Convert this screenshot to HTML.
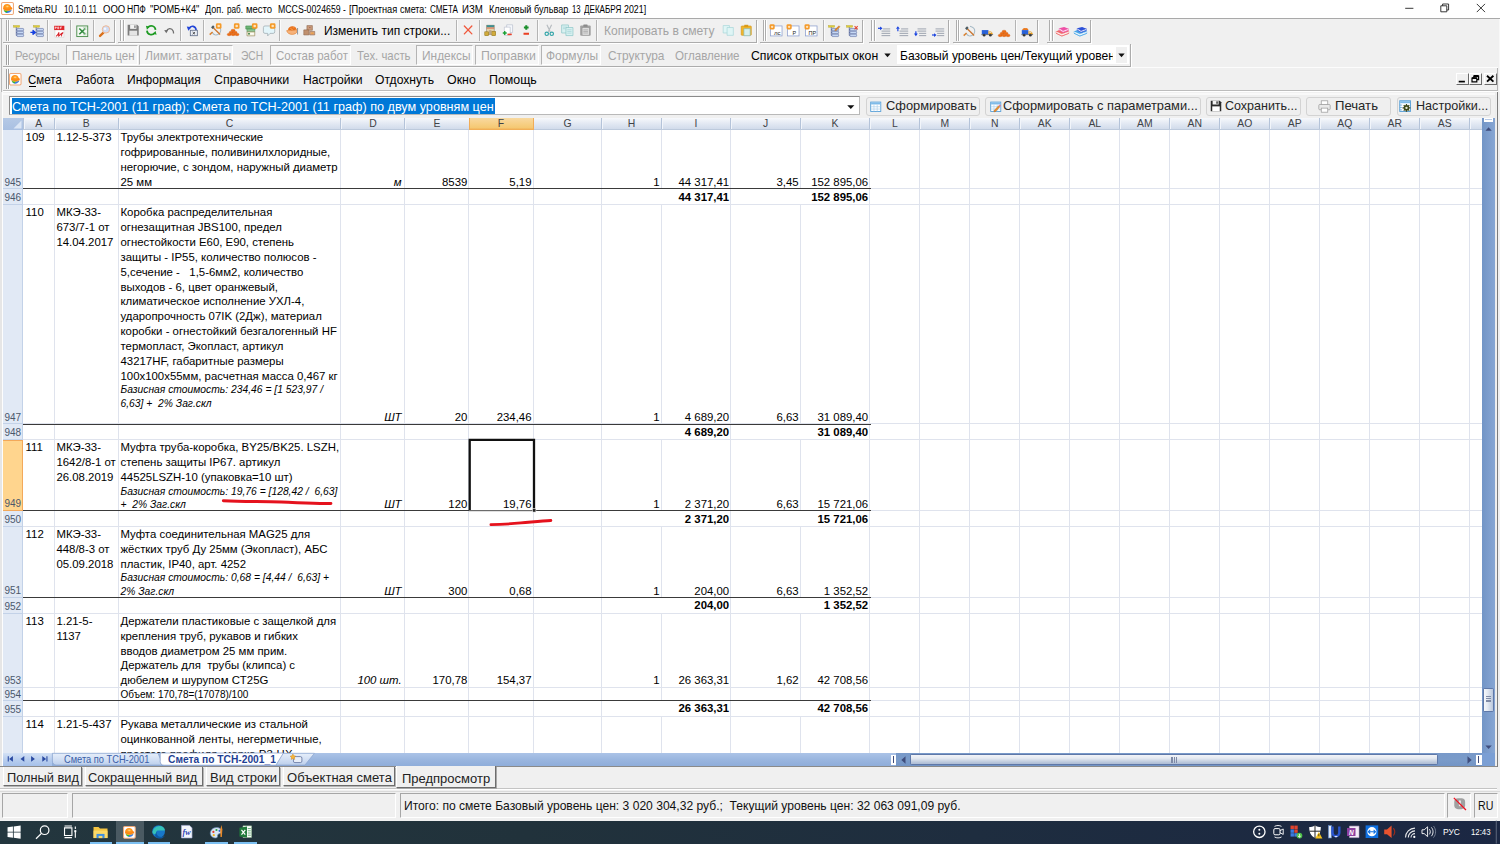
<!DOCTYPE html>
<html lang="ru"><head><meta charset="utf-8"><title>Smeta.RU</title><style>
html,body{margin:0;padding:0}
body{width:1500px;height:844px;position:relative;overflow:hidden;background:#f0f0f0;font-family:"Liberation Sans",sans-serif}
.b,.t,.c,.i{position:absolute}
.t{white-space:pre}
.c{white-space:pre;color:#000;overflow:visible}
.i{display:block;overflow:visible}
</style></head>
<body>
<!-- top -->
<div class="b" style="left:0.00px;top:0.00px;width:1500.00px;height:18.40px;background:#fff"></div>
<div class="b" style="left:0.00px;top:18.00px;width:1500.00px;height:1.00px;background:#a9a9a9"></div>
<svg class="i" style="left:1.20px;top:1.90px" width="13" height="13" viewBox="0 0 16 16"><defs><radialGradient id="ag1" cx=".45" cy=".38" r=".6"><stop offset="0" stop-color="#ffd98a"/><stop offset=".35" stop-color="#ff9a1e"/><stop offset="1" stop-color="#ff7f0e"/></radialGradient></defs><rect x=".7" y=".7" width="14.600" height="14.600" rx="1.600" fill="#fff" stroke="#f0a878" stroke-width="1.300"/><path d="M3.400 9.800c1 3.900 5.600 5.600 9.200 1.400l.5-1.800z" fill="#3a7be6"/><path d="M3.400 9.600c.5 2 2 3.200 3.800 3.400.3-1.400 1.200-2.600 2.600-3.200z" fill="#34c224"/><path d="M3 9.200c2.500 1.200 6.500 1.400 10.200-.6l-.2 1.400c-3 1.500-7 1.600-9.800.2z" fill="#ffb43a"/><path d="M2.600 7.600C2.600 4.600 4.800 2.600 7.600 2.600c2.400 0 4.200 1.400 4.800 3.600.8.400 1.400 1 1.700 1.800-1.400 1.500-4 2.200-6.500 2.200-2.200 0-4-.6-5-1.500z" fill="url(#ag1)"/></svg>
<div class="t" style="left:18.20px;top:2.63px;line-height:13.0px;font-size:10px;color:#000;transform:scaleX(0.8477);transform-origin:left 0;">Smeta.RU</div>
<div class="t" style="left:63.60px;top:2.63px;line-height:13.0px;font-size:10px;color:#000;transform:scaleX(0.8032);transform-origin:left 0;">10.1.0.11</div>
<div class="t" style="left:103.00px;top:2.63px;line-height:13.0px;font-size:10px;color:#000;transform:scaleX(0.9514);transform-origin:left 0;">ООО</div>
<div class="t" style="left:127.30px;top:2.63px;line-height:13.0px;font-size:10px;color:#000;transform:scaleX(0.8586);transform-origin:left 0;">НПФ</div>
<div class="t" style="left:150.20px;top:2.63px;line-height:13.0px;font-size:10px;color:#000;transform:scaleX(0.9224);transform-origin:left 0;">"РОМБ+К4"</div>
<div class="t" style="left:204.80px;top:2.63px;line-height:13.0px;font-size:10px;color:#000;transform:scaleX(0.9109);transform-origin:left 0;">Доп.</div>
<div class="t" style="left:226.70px;top:2.63px;line-height:13.0px;font-size:10px;color:#000;transform:scaleX(0.8202);transform-origin:left 0;">раб.</div>
<div class="t" style="left:245.90px;top:2.63px;line-height:13.0px;font-size:10px;color:#000;transform:scaleX(0.9503);transform-origin:left 0;">место</div>
<div class="t" style="left:277.60px;top:2.63px;line-height:13.0px;font-size:10px;color:#000;transform:scaleX(0.8730);transform-origin:left 0;">MCCS-0024659</div>
<div class="t" style="left:343.40px;top:2.63px;line-height:13.0px;font-size:10px;color:#000;transform:scaleX(0.8408);transform-origin:left 0;">-</div>
<div class="t" style="left:349.20px;top:2.63px;line-height:13.0px;font-size:10px;color:#000;transform:scaleX(0.9231);transform-origin:left 0;">[Проектная</div>
<div class="t" style="left:400.00px;top:2.63px;line-height:13.0px;font-size:10px;color:#000;transform:scaleX(0.8960);transform-origin:left 0;">смета:</div>
<div class="t" style="left:430.00px;top:2.63px;line-height:13.0px;font-size:10px;color:#000;transform:scaleX(0.8103);transform-origin:left 0;">СМЕТА</div>
<div class="t" style="left:461.80px;top:2.63px;line-height:13.0px;font-size:10px;color:#000;transform:scaleX(0.9649);transform-origin:left 0;">ИЗМ</div>
<div class="t" style="left:488.50px;top:2.63px;line-height:13.0px;font-size:10px;color:#000;transform:scaleX(0.9118);transform-origin:left 0;">Кленовый</div>
<div class="t" style="left:534.30px;top:2.63px;line-height:13.0px;font-size:10px;color:#000;transform:scaleX(0.9109);transform-origin:left 0;">бульвар</div>
<div class="t" style="left:572.20px;top:2.63px;line-height:13.0px;font-size:10px;color:#000;transform:scaleX(0.7732);transform-origin:left 0;">13</div>
<div class="t" style="left:584.00px;top:2.63px;line-height:13.0px;font-size:10px;color:#000;transform:scaleX(0.8100);transform-origin:left 0;">ДЕКАБРЯ</div>
<div class="t" style="left:624.40px;top:2.63px;line-height:13.0px;font-size:10px;color:#000;transform:scaleX(0.8831);transform-origin:left 0;">2021]</div>
<svg class="i" style="left:1400px;top:0" width="100" height="18" viewBox="0 0 100 18"><path d="M5.200 8.300h8.200" stroke="#222" stroke-width=".9"/><path d="M40.800 5.800h6v6h-6z M42.600 5.800V4h6v6h-1.800" stroke="#222" stroke-width=".9" fill="none"/><path d="M76.800 3.900l8.200 8.200M85 3.900l-8.200 8.200" stroke="#222" stroke-width=".9"/></svg>
<div class="b" style="left:0.00px;top:19.00px;width:1500.00px;height:73.00px;background:#f0f0f0"></div>
<div class="b" style="left:0.60px;top:19.00px;width:1.00px;height:73.00px;background:#b8b8b8"></div>
<div class="b" style="left:2.80px;top:19.50px;width:112.70px;height:23.20px;border-right:1px solid #acacac;border-bottom:1px solid #acacac;box-sizing:border-box;box-shadow:1px 1px 0 #fff"></div><div class="b" style="left:5.60px;top:20.20px;width:1.00px;height:20.60px;background:#adadad;box-shadow:1px 0 0 #fff"></div><div class="b" style="left:7.80px;top:20.20px;width:1.00px;height:20.60px;background:#adadad;box-shadow:1px 0 0 #fff"></div>
<div class="b" style="left:117.50px;top:19.50px;width:639.00px;height:23.20px;border-right:1px solid #acacac;border-bottom:1px solid #acacac;box-sizing:border-box;box-shadow:1px 1px 0 #fff"></div><div class="b" style="left:120.30px;top:20.20px;width:1.00px;height:20.60px;background:#adadad;box-shadow:1px 0 0 #fff"></div><div class="b" style="left:122.50px;top:20.20px;width:1.00px;height:20.60px;background:#adadad;box-shadow:1px 0 0 #fff"></div>
<div class="b" style="left:760.00px;top:19.50px;width:103.00px;height:23.20px;border-right:1px solid #acacac;border-bottom:1px solid #acacac;box-sizing:border-box;box-shadow:1px 1px 0 #fff"></div><div class="b" style="left:762.80px;top:20.20px;width:1.00px;height:20.60px;background:#adadad;box-shadow:1px 0 0 #fff"></div><div class="b" style="left:765.00px;top:20.20px;width:1.00px;height:20.60px;background:#adadad;box-shadow:1px 0 0 #fff"></div>
<div class="b" style="left:868.60px;top:19.50px;width:80.40px;height:23.20px;border-right:1px solid #acacac;border-bottom:1px solid #acacac;box-sizing:border-box;box-shadow:1px 1px 0 #fff"></div><div class="b" style="left:871.40px;top:20.20px;width:1.00px;height:20.60px;background:#adadad;box-shadow:1px 0 0 #fff"></div><div class="b" style="left:873.60px;top:20.20px;width:1.00px;height:20.60px;background:#adadad;box-shadow:1px 0 0 #fff"></div>
<div class="b" style="left:952.80px;top:19.50px;width:85.20px;height:23.20px;border-right:1px solid #acacac;border-bottom:1px solid #acacac;box-sizing:border-box;box-shadow:1px 1px 0 #fff"></div><div class="b" style="left:955.60px;top:20.20px;width:1.00px;height:20.60px;background:#adadad;box-shadow:1px 0 0 #fff"></div><div class="b" style="left:957.80px;top:20.20px;width:1.00px;height:20.60px;background:#adadad;box-shadow:1px 0 0 #fff"></div>
<div class="b" style="left:1046.60px;top:19.50px;width:44.60px;height:23.20px;border-right:1px solid #acacac;border-bottom:1px solid #acacac;box-sizing:border-box;box-shadow:1px 1px 0 #fff"></div><div class="b" style="left:1049.40px;top:20.20px;width:1.00px;height:20.60px;background:#adadad;box-shadow:1px 0 0 #fff"></div><div class="b" style="left:1051.60px;top:20.20px;width:1.00px;height:20.60px;background:#adadad;box-shadow:1px 0 0 #fff"></div>
<svg class="i" style="left:12.80px;top:24.50px" width="12.5" height="12.5" viewBox="0 0 16 16"><rect x=".5" y=".6" width="8" height="2.300" fill="#dccb3a" stroke="#a89a22" stroke-width=".4"/><path d="M4.200 2.900V13.300h1M4.200 6h1M4.200 9.700h1" stroke="#3f5290" stroke-width=".9" fill="none"/><rect x="5" y="4.4" width="8.600" height="3" rx=".9" fill="#c6d8f4" stroke="#3f5290" stroke-width=".6"/><rect x="5" y="8.100000000000001" width="8.600" height="3" rx=".9" fill="#c6d8f4" stroke="#3f5290" stroke-width=".6"/><rect x="5" y="11.8" width="8.600" height="3" rx=".9" fill="#c6d8f4" stroke="#3f5290" stroke-width=".6"/></svg>
<svg class="i" style="left:30.80px;top:24.50px" width="12.5" height="12.5" viewBox="0 0 16 16"><rect x="3" y=".6" width="8" height="2.300" fill="#dccb3a" stroke="#a89a22" stroke-width=".4"/><path d="M6.600 2.900V13.300h1M6.600 6h1M6.600 9.700h1" stroke="#3f5290" stroke-width=".9" fill="none"/><rect x="7.4" y="4.4" width="8.600" height="3" rx=".9" fill="#c6d8f4" stroke="#3f5290" stroke-width=".6"/><rect x="7.4" y="8.100000000000001" width="8.600" height="3" rx=".9" fill="#c6d8f4" stroke="#3f5290" stroke-width=".6"/><rect x="7.4" y="11.8" width="8.600" height="3" rx=".9" fill="#c6d8f4" stroke="#3f5290" stroke-width=".6"/><path d="M-.8 9.500h3.500M2.600 7 5.600 9.500 2.600 12z" stroke="#1540e0" stroke-width="1.600" fill="#1540e0" stroke-linejoin="round"/></svg>
<svg class="i" style="left:52.80px;top:24.50px" width="12.5" height="12.5" viewBox="0 0 16 16"><rect x="2.500" y="6" width="11.500" height="9.500" fill="#fff" stroke="#c8c8c8" stroke-width=".6"/><rect x="1.500" y="1" width="13" height="5.500" fill="#e0262b"/><path d="M3 4.800V2.500h1.200v1.200H3M6 2.500v2.300h1.300V2.500zM9.500 4.800V2.500h1.800M9.500 3.700h1.300" stroke="#fff" stroke-width=".8" fill="none"/><path d="M4 14.500c1.500-1 3-3 3.500-5 .4 1.800-.6 3.600-.2 4.800 1.200-1.200 3.500-4 5.700-4.600-1.600 1.200-2.500 3-2 4.800" stroke="#d8232a" stroke-width="1.300" fill="none"/></svg>
<svg class="i" style="left:75.50px;top:24.50px" width="12.5" height="12.5" viewBox="0 0 16 16"><rect x="1" y="1.200" width="14" height="13.600" fill="#f4f9f3" stroke="#4d8f4e" stroke-width="1.200"/><path d="M4.200 4.500l7.600 7.400M11.800 4.500l-7.600 7.400" stroke="#2f8a3c" stroke-width="2"/><path d="M9 3.500h4.500M9 5.500h4.500M9 10.500h4.500M9 12.500h4.500" stroke="#9cc79e" stroke-width=".8"/></svg>
<svg class="i" style="left:98.00px;top:24.50px" width="12.5" height="12.5" viewBox="0 0 16 16"><path d="M7 9.800 2.600 14" stroke="#d9701c" stroke-width="3" stroke-linecap="round"/><circle cx="10.200" cy="5.600" r="4.700" fill="#cfdcf5" stroke="#f0b48c" stroke-width="1.200"/><circle cx="9" cy="4.800" r="1.600" fill="#fff" opacity=".8"/></svg>
<svg class="i" style="left:127.30px;top:24.10px" width="12.5" height="12.5" viewBox="0 0 16 16"><path d="M.8 1h12.200l2 2v11.800H.8z" fill="#7d7d7d"/><rect x="4" y="1" width="8" height="5.200" fill="#f4f4f4"/><rect x="9.300" y="1.800" width="1.700" height="3.200" fill="#7d7d7d"/><rect x="3" y="8.600" width="10" height="6.200" fill="#e4e4e4"/></svg>
<svg class="i" style="left:145.00px;top:24.10px" width="12.5" height="12.5" viewBox="0 0 16 16"><path d="M13.500 7.500A5.500 5.500 0 0 0 3.600 4.600" stroke="#1d9a22" stroke-width="2.200" fill="none"/><path d="M1.200 2.200 6 3.500 2.500 7.200z" fill="#1d9a22"/><path d="M2.500 8.500a5.500 5.500 0 0 0 9.900 2.900" stroke="#1d9a22" stroke-width="2.200" fill="none"/><path d="M14.800 13.800 10 12.500l3.500-3.700z" fill="#1d9a22"/></svg>
<svg class="i" style="left:163.20px;top:24.10px" width="12.5" height="12.5" viewBox="0 0 16 16"><path d="M4.500 9.500C5.500 5.500 11 4.500 13 9c.4 1 .5 2 .5 3" stroke="#6f6f6f" stroke-width="1.600" fill="none"/><path d="M1.500 8l5.200-.6-2.400 4.400z" fill="#6f6f6f"/></svg>
<svg class="i" style="left:186.00px;top:24.10px" width="12.5" height="12.5" viewBox="0 0 16 16"><path d="M4 6C6 1.500 12.500 2 13 8" stroke="#2346d8" stroke-width="2" fill="none"/><path d="M1 3.200 6.800 4 3 8.500z" fill="#2346d8"/><rect x="5.500" y="8" width="9" height="7" fill="#e8ecf4" stroke="#5a6784" stroke-width="1"/><path d="M8.500 10.300l3 2.800M11.500 10.300l-3 2.800" stroke="#333" stroke-width="1"/></svg>
<svg class="i" style="left:208.50px;top:24.10px" width="12.5" height="12.5" viewBox="0 0 16 16"><path d="M9 1.600C13 2.600 15.400 5.500 15 8.600 14.500 12.200 11 14.600 7.500 13.900 6 13.500 5 12.400 4.300 11" stroke="#a3b8c4" stroke-width="1.300" fill="none"/><path d="M4.600 10.300.9 13.600" stroke="#d9802e" stroke-width="1.900"/><path d="M5.500 4.800 14.200 13.400" stroke="#cc762f" stroke-width="1.700"/><path d="M2.600 4.300 5.200 1.700 7.200 3.700 4.600 6.300z" fill="#4c5a60"/><rect x="8.800" y="-1" width="7.200" height="7.200" rx="1.800" fill="#f59a28"/><circle cx="12.400" cy="2.600" r="1.700" fill="#fde3bd"/></svg>
<svg class="i" style="left:226.50px;top:24.10px" width="12.5" height="12.5" viewBox="0 0 16 16"><ellipse cx="7.8" cy="8.2" rx="2.600" ry="1.600" fill="#ee6d12" stroke="#c9520a" stroke-width=".4"/><ellipse cx="5.3" cy="10.8" rx="2.600" ry="1.600" fill="#ee6d12" stroke="#c9520a" stroke-width=".4"/><ellipse cx="10.3" cy="10.8" rx="2.600" ry="1.600" fill="#ee6d12" stroke="#c9520a" stroke-width=".4"/><ellipse cx="2.8" cy="13.4" rx="2.600" ry="1.600" fill="#ee6d12" stroke="#c9520a" stroke-width=".4"/><ellipse cx="7.8" cy="13.4" rx="2.600" ry="1.600" fill="#ee6d12" stroke="#c9520a" stroke-width=".4"/><ellipse cx="12.8" cy="13.4" rx="2.600" ry="1.600" fill="#ee6d12" stroke="#c9520a" stroke-width=".4"/><rect x="8.800" y="-1" width="7.200" height="7.200" rx="1.800" fill="#f59a28"/><circle cx="12.400" cy="2.600" r="1.700" fill="#fde3bd"/></svg>
<svg class="i" style="left:244.50px;top:24.10px" width="12.5" height="12.5" viewBox="0 0 16 16"><path d="M1 2.500h12.500v4h-12.500z" fill="#6db577" stroke="#3c8a4a" stroke-width=".7"/><path d="M2.500 6.500h10v3.500h-10z" fill="#8cc693" stroke="#3c8a4a" stroke-width=".6"/><path d="M2.500 10h10v5.200h-10z" fill="#f1efd8" stroke="#8a7a4a" stroke-width=".7"/><rect x="4" y="11.500" width="2.200" height="2" fill="#3f7f46"/><rect x="6.800" y="11.800" width="4.500" height="1.600" fill="#fff"/><rect x="8.800" y="-1" width="7.200" height="7.200" rx="1.800" fill="#f59a28"/><circle cx="12.400" cy="2.600" r="1.700" fill="#fde3bd"/></svg>
<svg class="i" style="left:262.50px;top:24.10px" width="12.5" height="12.5" viewBox="0 0 16 16"><path d="M2.500 2.500h10.500a2 2 0 0 1 2 2v5.500a2 2 0 0 1-2 2H9l-3 3.200V12H2.500a2 2 0 0 1-2-2V4.500a2 2 0 0 1 2-2z" fill="#e3f5fa" stroke="#9aa7ad" stroke-width=".9"/><rect x="8.800" y="-1" width="7.200" height="7.200" rx="1.800" fill="#f59a28"/><circle cx="12.400" cy="2.600" r="1.700" fill="#fde3bd"/></svg>
<svg class="i" style="left:285.50px;top:24.10px" width="12.5" height="12.5" viewBox="0 0 16 16"><path d="M.8 8.500c.8 3.200 4 5 7.500 4.800 2.600-.2 4.600-1.200 5.700-2.800V7c-1.500.8-3.500 1.200-6 1.200-3 0-5.500-.4-7.200.3z" fill="#f6b27a" stroke="#e0761e" stroke-width=".7"/><path d="M2.500 7.500C3 4.500 5.500 2.800 8.500 3c2.500.2 4.500 1.500 5 3.800-1.500 1-3.500 1.500-6 1.500-2 0-3.800-.2-5-.8z" fill="#e8701a"/><path d="M5 5.500h2.500M8.500 4.800h2.500M6.500 7h2.500" stroke="#f9a55a" stroke-width=".8"/><path d="M14.800 5v8.500" stroke="#8f959c" stroke-width="1.300"/></svg>
<svg class="i" style="left:303.20px;top:24.10px" width="12.5" height="12.5" viewBox="0 0 16 16"><path d="M5 2h7v6H5z" fill="#c99a7a" stroke="#8a6248" stroke-width=".7"/><path d="M1 7.500h6.500v6.500H1z" fill="#c0906e" stroke="#8a6248" stroke-width=".7"/><path d="M8.500 9.500h6.500v4.500H8.500z" fill="#d9a57c" stroke="#8a6248" stroke-width=".7"/><rect x="10.500" y="11" width="3" height="1.600" fill="#f0a040"/><path d="M8 4.500h1.500" stroke="#8a4040" stroke-width=".8"/></svg>
<svg class="i" style="left:461.50px;top:24.10px" width="12.5" height="12.5" viewBox="0 0 16 16"><path d="M3 2.600l9.600 10M12.600 2.600 3 12.600" stroke="#f0583c" stroke-width="1.700" stroke-linecap="round"/></svg>
<svg class="i" style="left:484.20px;top:24.10px" width="12.5" height="12.5" viewBox="0 0 16 16"><rect x="3.500" y="1.500" width="9.500" height="12" fill="#e5d2aa" stroke="#8a7a5a" stroke-width=".7"/><rect x="3.500" y="1.500" width="9.500" height="2.600" fill="#3c8f92"/><path d="M3.500 5.200h9.500" stroke="#d23a2a" stroke-width=".9"/><rect x="1" y="10" width="5" height="5" fill="#d2ab3c" stroke="#8f7318" stroke-width=".7"/><rect x="10" y="9.500" width="5" height="5.500" fill="#d2ab3c" stroke="#8f7318" stroke-width=".7"/><rect x="6.500" y="8" width="3" height="6" fill="#b9a68a"/></svg>
<svg class="i" style="left:502.20px;top:24.10px" width="12.5" height="12.5" viewBox="0 0 16 16"><path d="M6 1h7.500v10H6z" fill="#f6f8fc" stroke="#b5bccb" stroke-width=".8"/><path d="M3 4h7.500v10.500H3z" fill="#fff" stroke="#b5bccb" stroke-width=".8"/><path d="M1 11.500h5M3.500 9v5" stroke="#18a032" stroke-width="1.700"/><path d="M7 13.300h5.500" stroke="#e8412b" stroke-width="2"/></svg>
<svg class="i" style="left:519.80px;top:24.10px" width="12.5" height="12.5" viewBox="0 0 16 16"><path d="M5 4.500h6M8 1.500v6" stroke="#1c8f2c" stroke-width="2.600"/><path d="M4.500 12.500h7" stroke="#ea4024" stroke-width="2.600"/></svg>
<svg class="i" style="left:543.00px;top:24.10px" width="12.5" height="12.5" viewBox="0 0 16 16"><path d="M5 1l4.200 9M11 1 6.800 10" stroke="#b7bcc0" stroke-width="1.500"/><circle cx="4.800" cy="12.500" r="2.200" fill="none" stroke="#33a5a8" stroke-width="1.500"/><circle cx="11.200" cy="12.500" r="2.200" fill="none" stroke="#33a5a8" stroke-width="1.500"/></svg>
<svg class="i" style="left:561.00px;top:24.10px" width="12.5" height="12.5" viewBox="0 0 16 16"><path d="M.8 1.200h8.700v10.300H.8z" fill="#d9f1f1" stroke="#8cc6c8" stroke-width=".9"/><path d="M2.500 4h5M2.500 6h3" stroke="#9ccfd2" stroke-width=".8"/><path d="M6.300 4.500h9v10.300h-9z" fill="#d9f1f1" stroke="#8cc6c8" stroke-width=".9"/><path d="M8 7.300h5.500M8 9.500h5.500M8 11.700h5.500" stroke="#9ccfd2" stroke-width=".8"/></svg>
<svg class="i" style="left:578.80px;top:24.10px" width="12.5" height="12.5" viewBox="0 0 16 16"><rect x="1.500" y="2" width="13.500" height="13" rx="1.200" fill="#a2a2a2"/><rect x="5.500" y=".6" width="5.500" height="3" rx=".6" fill="#8a8a8a"/><rect x="4" y="4.800" width="9" height="9.400" fill="#dedede" stroke="#8e8e8e" stroke-width=".5"/><path d="M5.500 7.500h6M5.500 9.500h6M5.500 11.500h6" stroke="#9a9a9a" stroke-width=".8"/></svg>
<svg class="i" style="left:721.80px;top:24.10px" width="12.5" height="12.5" viewBox="0 0 16 16"><path d="M1.500 2h8v9.500h-8z" fill="#dff5f5" stroke="#a6d6d8" stroke-width=".9"/><path d="M6.500 4.500h8v10h-8z" fill="#dff5f5" stroke="#a6d6d8" stroke-width=".9"/></svg>
<svg class="i" style="left:739.80px;top:24.10px" width="12.5" height="12.5" viewBox="0 0 16 16"><rect x="1.500" y="2.500" width="13" height="12" rx="1" fill="#f1b52b" stroke="#c98d12" stroke-width=".7"/><rect x="5.500" y="1" width="5" height="3" fill="#d99a18"/><path d="M5 6h8v9H5z" fill="#d6efee" stroke="#7db8ba" stroke-width=".8"/></svg>
<svg class="i" style="left:769.60px;top:24.60px" width="12.5" height="12.5" viewBox="0 0 16 16"><rect x=".6" y="1.200" width="14.800" height="12.800" fill="#fff" stroke="#8fa0cf" stroke-width="1"/><text x="9.400" y="12.600" font-size="7.8" font-family="Liberation Sans, sans-serif" text-anchor="middle" fill="#222">лс</text><rect x="-.6" y="-1" width="6.600" height="6.600" rx="1.700" fill="#f59a28"/><circle cx="2.700" cy="2.300" r="1.500" fill="#fde3bd"/></svg>
<svg class="i" style="left:787.40px;top:24.60px" width="12.5" height="12.5" viewBox="0 0 16 16"><rect x=".6" y="1.200" width="14.800" height="12.800" fill="#fff" stroke="#8fa0cf" stroke-width="1"/><text x="9.400" y="12.600" font-size="7" font-family="Liberation Sans, sans-serif" text-anchor="middle" fill="#222">Р</text><rect x="-.6" y="-1" width="6.600" height="6.600" rx="1.700" fill="#f59a28"/><circle cx="2.700" cy="2.300" r="1.500" fill="#fde3bd"/></svg>
<svg class="i" style="left:805.20px;top:24.60px" width="12.5" height="12.5" viewBox="0 0 16 16"><rect x=".6" y="1.200" width="14.800" height="12.800" fill="#fff" stroke="#8fa0cf" stroke-width="1"/><text x="9.400" y="12.600" font-size="7" font-family="Liberation Sans, sans-serif" text-anchor="middle" fill="#222">ПР</text><rect x="-.6" y="-1" width="6.600" height="6.600" rx="1.700" fill="#f59a28"/><circle cx="2.700" cy="2.300" r="1.500" fill="#fde3bd"/></svg>
<svg class="i" style="left:828.00px;top:24.60px" width="12.5" height="12.5" viewBox="0 0 16 16"><rect x=".5" y=".6" width="8" height="2.300" fill="#dccb3a" stroke="#a89a22" stroke-width=".4"/><path d="M4.200 2.900V13.300h1M4.200 6h1M4.200 9.700h1" stroke="#3f5290" stroke-width=".9" fill="none"/><rect x="5" y="4.4" width="8.600" height="3" rx=".9" fill="#c6d8f4" stroke="#3f5290" stroke-width=".6"/><rect x="5" y="8.100000000000001" width="8.600" height="3" rx=".9" fill="#c6d8f4" stroke="#3f5290" stroke-width=".6"/><rect x="5" y="11.8" width="8.600" height="3" rx=".9" fill="#c6d8f4" stroke="#3f5290" stroke-width=".6"/><path d="M8.500 6.500 14 1l1.300 1.300-5.500 5.500z" fill="#e98b2a" stroke="#a55a10" stroke-width=".5"/></svg>
<svg class="i" style="left:846.00px;top:24.60px" width="12.5" height="12.5" viewBox="0 0 16 16"><rect x=".5" y=".6" width="8" height="2.300" fill="#dccb3a" stroke="#a89a22" stroke-width=".4"/><path d="M4.200 2.900V13.300h1M4.200 6h1M4.200 9.700h1" stroke="#3f5290" stroke-width=".9" fill="none"/><rect x="5" y="4.4" width="8.600" height="3" rx=".9" fill="#c6d8f4" stroke="#3f5290" stroke-width=".6"/><rect x="5" y="8.100000000000001" width="8.600" height="3" rx=".9" fill="#c6d8f4" stroke="#3f5290" stroke-width=".6"/><rect x="5" y="11.8" width="8.600" height="3" rx=".9" fill="#c6d8f4" stroke="#3f5290" stroke-width=".6"/><path d="M11 1.500l4 4M15 1.500l-4 4" stroke="#e8412b" stroke-width="1.300"/></svg>
<svg class="i" style="left:878.40px;top:24.60px" width="12.5" height="12.5" viewBox="0 0 16 16"><path d="M6.5 5H15.600" stroke="#7b8596" stroke-width=".9"/><path d="M4.5 7.8H15.600" stroke="#7b8596" stroke-width=".9"/><path d="M4.5 10.7H15.600" stroke="#7b8596" stroke-width=".9"/><path d="M4.5 13.6H15.600" stroke="#7b8596" stroke-width=".9"/><path d="M0 4.200h3" stroke="#1540e0" stroke-width="1.500"/><path d="M2.600 1.800 5.800 4.200 2.600 6.600z" fill="#1540e0"/></svg>
<svg class="i" style="left:896.20px;top:24.60px" width="12.5" height="12.5" viewBox="0 0 16 16"><path d="M6.5 5H15.600" stroke="#7b8596" stroke-width=".9"/><path d="M4.5 7.8H15.600" stroke="#7b8596" stroke-width=".9"/><path d="M4.5 10.7H15.600" stroke="#7b8596" stroke-width=".9"/><path d="M4.5 13.6H15.600" stroke="#7b8596" stroke-width=".9"/><path d="M2.400 4.500v3.500" stroke="#1540e0" stroke-width="1.500"/><path d="M0 4.800 2.400 1.600 4.800 4.800z" fill="#1540e0"/></svg>
<svg class="i" style="left:914.00px;top:24.60px" width="12.5" height="12.5" viewBox="0 0 16 16"><path d="M4.5 5H15.600" stroke="#7b8596" stroke-width=".9"/><path d="M4.5 7.8H15.600" stroke="#7b8596" stroke-width=".9"/><path d="M6.5 10.7H15.600" stroke="#7b8596" stroke-width=".9"/><path d="M6.5 13.6H15.600" stroke="#7b8596" stroke-width=".9"/><path d="M2.400 8v3.500" stroke="#1540e0" stroke-width="1.500"/><path d="M0 11 2.400 14.400 4.800 11z" fill="#1540e0"/></svg>
<svg class="i" style="left:932.00px;top:24.60px" width="12.5" height="12.5" viewBox="0 0 16 16"><path d="M4.5 5H15.600" stroke="#7b8596" stroke-width=".9"/><path d="M4.5 7.8H15.600" stroke="#7b8596" stroke-width=".9"/><path d="M6.5 10.7H15.600" stroke="#7b8596" stroke-width=".9"/><path d="M6.5 13.6H15.600" stroke="#7b8596" stroke-width=".9"/><path d="M0 12.800h3" stroke="#1540e0" stroke-width="1.500"/><path d="M2.600 10.400 5.800 12.800 2.600 15.200z" fill="#1540e0"/></svg>
<svg class="i" style="left:962.60px;top:24.60px" width="12.5" height="12.5" viewBox="0 0 16 16"><path d="M9 1.600C13 2.600 15.400 5.500 15 8.600 14.500 12.200 11 14.600 7.500 13.900 6 13.500 5 12.400 4.300 11" stroke="#a3b8c4" stroke-width="1.300" fill="none"/><path d="M4.600 10.300.9 13.600" stroke="#d9802e" stroke-width="1.900"/><path d="M5.500 4.800 14.200 13.400" stroke="#cc762f" stroke-width="1.700"/><path d="M2.600 4.300 5.200 1.700 7.200 3.700 4.600 6.300z" fill="#4c5a60"/></svg>
<svg class="i" style="left:980.50px;top:24.60px" width="12.5" height="12.5" viewBox="0 0 16 16"><path d="M1 6.500h8.500v5.500H1z" fill="#2a62d8"/><path d="M9.500 8h3l2.300 2.200V12H9.500z" fill="#f0a322"/><path d="M10.700 8.600h1.700l1.300 1.400h-3z" fill="#dfeefc"/><circle cx="4" cy="13" r="1.700" fill="#333"/><circle cx="12" cy="13" r="1.700" fill="#333"/><path d="M0.500 12h15v.9H.5z" fill="#4a4a4a"/></svg>
<svg class="i" style="left:998.30px;top:24.60px" width="12.5" height="12.5" viewBox="0 0 16 16"><ellipse cx="7.8" cy="8.2" rx="2.600" ry="1.600" fill="#ee6d12" stroke="#c9520a" stroke-width=".4"/><ellipse cx="5.3" cy="10.8" rx="2.600" ry="1.600" fill="#ee6d12" stroke="#c9520a" stroke-width=".4"/><ellipse cx="10.3" cy="10.8" rx="2.600" ry="1.600" fill="#ee6d12" stroke="#c9520a" stroke-width=".4"/><ellipse cx="2.8" cy="13.4" rx="2.600" ry="1.600" fill="#ee6d12" stroke="#c9520a" stroke-width=".4"/><ellipse cx="7.8" cy="13.4" rx="2.600" ry="1.600" fill="#ee6d12" stroke="#c9520a" stroke-width=".4"/><ellipse cx="12.8" cy="13.4" rx="2.600" ry="1.600" fill="#ee6d12" stroke="#c9520a" stroke-width=".4"/></svg>
<svg class="i" style="left:1021.00px;top:24.60px" width="12.5" height="12.5" viewBox="0 0 16 16"><path d="M1 6.500h8.500v5.500H1z" fill="#2a62d8"/><path d="M9.500 8h3l2.300 2.200V12H9.500z" fill="#f0a322"/><path d="M10.700 8.600h1.700l1.300 1.400h-3z" fill="#dfeefc"/><circle cx="4" cy="13" r="1.700" fill="#333"/><circle cx="12" cy="13" r="1.700" fill="#333"/><path d="M0.500 12h15v.9H.5z" fill="#4a4a4a"/><path d="M1.500 6.500c.5-2 2.500-3 4-2.500 1.500-.8 3.500 0 4 2.500z" fill="#e9791f"/></svg>
<svg class="i" style="left:1056.30px;top:24.60px" width="12.5" height="12.5" viewBox="0 0 16 16"><path d="M0 8.200 4 6.500 9 9.400 16 6.800 16.400 8.400 7.500 11.600z" fill="#f06a6a"/><path d="M0 8.200 7.500 11.600 16.400 8.400V10.600L7.500 14 0 10.400z" fill="#fff" stroke="#f06a6a" stroke-width=".5"/><path d="M0 10.500 7.500 14.100 16.400 10.700" fill="none" stroke="#f06a6a" stroke-width="1.100"/><path d="M4 4.300 9 7.200 16 4.800V6.700L9 9.300 4 6.300z" fill="#fff" stroke="#ee4fa6" stroke-width=".5"/><path d="M4 4.300 10.400 2.400 16 4.800 9 7.200z" fill="#ee4fa6"/><path d="M4 6.400 9 9.400 16 6.800" fill="none" stroke="#ee4fa6" stroke-width=".9"/></svg>
<svg class="i" style="left:1074.20px;top:24.60px" width="12.5" height="12.5" viewBox="0 0 16 16"><path d="M0 8.200 4 6.500 9 9.400 16 6.800 16.400 8.400 7.500 11.600z" fill="#4aa8e8"/><path d="M0 8.200 7.500 11.600 16.400 8.400V10.600L7.500 14 0 10.400z" fill="#fff" stroke="#4aa8e8" stroke-width=".5"/><path d="M0 10.500 7.500 14.100 16.400 10.700" fill="none" stroke="#4aa8e8" stroke-width="1.100"/><path d="M4 4.300 9 7.200 16 4.800V6.700L9 9.300 4 6.300z" fill="#fff" stroke="#2b4fd8" stroke-width=".5"/><path d="M4 4.300 10.400 2.400 16 4.800 9 7.200z" fill="#2b4fd8"/><path d="M4 6.400 9 9.400 16 6.800" fill="none" stroke="#2b4fd8" stroke-width=".9"/></svg>
<div class="b" style="left:47.10px;top:20.30px;width:1.00px;height:20.70px;background:#b4b4b4;box-shadow:1px 0 0 #fbfbfb"></div>
<div class="b" style="left:69.70px;top:20.30px;width:1.00px;height:20.70px;background:#b4b4b4;box-shadow:1px 0 0 #fbfbfb"></div>
<div class="b" style="left:92.60px;top:20.30px;width:1.00px;height:20.70px;background:#b4b4b4;box-shadow:1px 0 0 #fbfbfb"></div>
<div class="b" style="left:179.70px;top:20.30px;width:1.00px;height:20.70px;background:#b4b4b4;box-shadow:1px 0 0 #fbfbfb"></div>
<div class="b" style="left:202.50px;top:20.30px;width:1.00px;height:20.70px;background:#b4b4b4;box-shadow:1px 0 0 #fbfbfb"></div>
<div class="b" style="left:279.10px;top:20.30px;width:1.00px;height:20.70px;background:#b4b4b4;box-shadow:1px 0 0 #fbfbfb"></div>
<div class="b" style="left:455.60px;top:20.30px;width:1.00px;height:20.70px;background:#b4b4b4;box-shadow:1px 0 0 #fbfbfb"></div>
<div class="b" style="left:478.60px;top:20.30px;width:1.00px;height:20.70px;background:#b4b4b4;box-shadow:1px 0 0 #fbfbfb"></div>
<div class="b" style="left:536.70px;top:20.30px;width:1.00px;height:20.70px;background:#b4b4b4;box-shadow:1px 0 0 #fbfbfb"></div>
<div class="b" style="left:595.90px;top:20.30px;width:1.00px;height:20.70px;background:#b4b4b4;box-shadow:1px 0 0 #fbfbfb"></div>
<div class="b" style="left:822.50px;top:20.30px;width:1.00px;height:20.70px;background:#b4b4b4;box-shadow:1px 0 0 #fbfbfb"></div>
<div class="b" style="left:1015.10px;top:20.30px;width:1.00px;height:20.70px;background:#b4b4b4;box-shadow:1px 0 0 #fbfbfb"></div>
<div class="t" style="left:324.00px;top:23.04px;line-height:16.38px;font-size:12.6px;color:#000;transform:scaleX(0.9524);transform-origin:left 0;">Изменить тип строки...</div>
<div class="t" style="left:604.20px;top:23.04px;line-height:16.38px;font-size:12.6px;color:#a3a3a3;transform:scaleX(0.9592);transform-origin:left 0;">Копировать в смету</div>
<div class="b" style="left:2.80px;top:43.60px;width:1128.40px;height:23.40px;border-right:1px solid #acacac;border-bottom:1px solid #acacac;box-sizing:border-box;box-shadow:1px 1px 0 #fff"></div>
<div class="b" style="left:5.60px;top:45.00px;width:1.00px;height:19.50px;background:#a0a0a0;box-shadow:1px 0 0 #fff"></div>
<div class="b" style="left:7.80px;top:45.00px;width:1.00px;height:19.50px;background:#a0a0a0;box-shadow:1px 0 0 #fff"></div>
<div class="b" style="left:65.60px;top:44.80px;width:72.60px;height:20.50px;background:#f6f6f6;border-left:1px solid #b4b4b4;border-top:1px solid #b4b4b4;border-right:1px solid #fff;border-bottom:1px solid #fff;box-sizing:border-box"></div>
<div class="b" style="left:139.20px;top:44.80px;width:93.80px;height:20.50px;background:#f6f6f6;border-left:1px solid #b4b4b4;border-top:1px solid #b4b4b4;border-right:1px solid #fff;border-bottom:1px solid #fff;box-sizing:border-box"></div>
<div class="b" style="left:270.00px;top:44.80px;width:80.50px;height:20.50px;background:#f6f6f6;border-left:1px solid #b4b4b4;border-top:1px solid #b4b4b4;border-right:1px solid #fff;border-bottom:1px solid #fff;box-sizing:border-box"></div>
<div class="b" style="left:416.00px;top:44.80px;width:57.30px;height:20.50px;background:#f6f6f6;border-left:1px solid #b4b4b4;border-top:1px solid #b4b4b4;border-right:1px solid #fff;border-bottom:1px solid #fff;box-sizing:border-box"></div>
<div class="b" style="left:475.30px;top:44.80px;width:63.90px;height:20.50px;background:#f6f6f6;border-left:1px solid #b4b4b4;border-top:1px solid #b4b4b4;border-right:1px solid #fff;border-bottom:1px solid #fff;box-sizing:border-box"></div>
<div class="b" style="left:540.80px;top:44.80px;width:60.20px;height:20.50px;background:#f6f6f6;border-left:1px solid #b4b4b4;border-top:1px solid #b4b4b4;border-right:1px solid #fff;border-bottom:1px solid #fff;box-sizing:border-box"></div>
<div class="t" style="left:14.80px;top:48.14px;line-height:16.12px;font-size:12.4px;color:#a6a6a6;transform:scaleX(0.9143);transform-origin:left 0;">Ресурсы</div>
<div class="t" style="left:71.50px;top:48.14px;line-height:16.12px;font-size:12.4px;color:#a6a6a6;transform:scaleX(0.9360);transform-origin:left 0;">Панель цен</div>
<div class="t" style="left:145.00px;top:48.14px;line-height:16.12px;font-size:12.4px;color:#a6a6a6;transform:scaleX(0.9828);transform-origin:left 0;">Лимит. затраты</div>
<div class="t" style="left:241.00px;top:48.14px;line-height:16.12px;font-size:12.4px;color:#a6a6a6;transform:scaleX(0.8277);transform-origin:left 0;">ЭСН</div>
<div class="t" style="left:275.50px;top:48.14px;line-height:16.12px;font-size:12.4px;color:#a6a6a6;transform:scaleX(0.9264);transform-origin:left 0;">Состав работ</div>
<div class="t" style="left:357.00px;top:48.14px;line-height:16.12px;font-size:12.4px;color:#a6a6a6;transform:scaleX(0.9196);transform-origin:left 0;">Тех. часть</div>
<div class="t" style="left:422.00px;top:48.14px;line-height:16.12px;font-size:12.4px;color:#a6a6a6;transform:scaleX(0.9611);transform-origin:left 0;">Индексы</div>
<div class="t" style="left:481.00px;top:48.14px;line-height:16.12px;font-size:12.4px;color:#a6a6a6;transform:scaleX(0.9918);transform-origin:left 0;">Поправки</div>
<div class="t" style="left:546.00px;top:48.14px;line-height:16.12px;font-size:12.4px;color:#a6a6a6;transform:scaleX(0.9637);transform-origin:left 0;">Формулы</div>
<div class="t" style="left:607.50px;top:48.14px;line-height:16.12px;font-size:12.4px;color:#a6a6a6;transform:scaleX(0.9604);transform-origin:left 0;">Структура</div>
<div class="t" style="left:674.70px;top:48.14px;line-height:16.12px;font-size:12.4px;color:#a6a6a6;transform:scaleX(0.9344);transform-origin:left 0;">Оглавление</div>
<div class="t" style="left:751.30px;top:48.14px;line-height:16.12px;font-size:12.4px;color:#000;transform:scaleX(0.9893);transform-origin:left 0;">Список открытых окон</div>
<svg class="i" style="left:883.6px;top:52.8px" width="7" height="5" viewBox="0 0 7 5"><path d="M.3.600h6.400L3.500 4.300z" fill="#111"/></svg>
<div class="b" style="left:897.00px;top:44.80px;width:231.60px;height:19.40px;background:#fff"></div>
<div class="t" style="left:899.60px;top:48.14px;line-height:16.12px;font-size:12.4px;color:#000;transform:scaleX(0.9759);transform-origin:left 0;width:217.84px;overflow:hidden;">Базовый уровень цен/Текущий уровень</div>
<div class="b" style="left:1115.80px;top:47.20px;width:11.30px;height:15.40px;background:#f0f0f0"></div>
<svg class="i" style="left:1118px;top:53px" width="7" height="5" viewBox="0 0 7 5"><path d="M.3.600h6.400L3.500 4.300z" fill="#111"/></svg>
<div class="b" style="left:2.80px;top:66.90px;width:1495.40px;height:1.00px;background:#fcfcfc"></div>
<div class="b" style="left:2.80px;top:67.90px;width:1495.40px;height:23.40px;border-bottom:1.200px solid #bcbcbc;border-right:1px solid #b4b4b4;box-sizing:border-box;box-shadow:0 1px 0 #fff"></div>
<div class="b" style="left:1499.20px;top:19.00px;width:0.80px;height:73.00px;background:#f8f8f8"></div>
<div class="b" style="left:5.60px;top:69.00px;width:1.00px;height:19.50px;background:#a0a0a0;box-shadow:1px 0 0 #fff"></div>
<div class="b" style="left:7.80px;top:69.00px;width:1.00px;height:19.50px;background:#a0a0a0;box-shadow:1px 0 0 #fff"></div>
<svg class="i" style="left:9.40px;top:72.90px" width="12.6" height="12.6" viewBox="0 0 16 16"><defs><radialGradient id="ag2" cx=".45" cy=".38" r=".6"><stop offset="0" stop-color="#ffd98a"/><stop offset=".35" stop-color="#ff9a1e"/><stop offset="1" stop-color="#ff7f0e"/></radialGradient></defs><rect x=".7" y=".7" width="14.600" height="14.600" rx="1.600" fill="#fff" stroke="#f0a878" stroke-width="1.300"/><path d="M3.400 9.800c1 3.900 5.600 5.600 9.200 1.400l.5-1.800z" fill="#3a7be6"/><path d="M3.400 9.600c.5 2 2 3.200 3.800 3.400.3-1.400 1.200-2.600 2.600-3.200z" fill="#34c224"/><path d="M3 9.200c2.500 1.200 6.500 1.400 10.200-.6l-.2 1.400c-3 1.500-7 1.600-9.800.2z" fill="#ffb43a"/><path d="M2.600 7.600C2.600 4.600 4.800 2.600 7.600 2.600c2.400 0 4.200 1.400 4.800 3.600.8.400 1.400 1 1.700 1.800-1.400 1.500-4 2.200-6.500 2.200-2.200 0-4-.6-5-1.500z" fill="url(#ag2)"/></svg>
<!-- mid -->
<div class="t" style="left:28.40px;top:71.64px;line-height:16.38px;font-size:12.6px;color:#000;transform:scaleX(0.9138);transform-origin:left 0;">Смета</div>
<div class="t" style="left:75.80px;top:71.64px;line-height:16.38px;font-size:12.6px;color:#000;transform:scaleX(0.9188);transform-origin:left 0;">Работа</div>
<div class="t" style="left:127.20px;top:71.64px;line-height:16.38px;font-size:12.6px;color:#000;transform:scaleX(0.9566);transform-origin:left 0;">Информация</div>
<div class="t" style="left:214.20px;top:71.64px;line-height:16.38px;font-size:12.6px;color:#000;transform:scaleX(0.9852);transform-origin:left 0;">Справочники</div>
<div class="t" style="left:302.60px;top:71.64px;line-height:16.38px;font-size:12.6px;color:#000;transform:scaleX(0.9647);transform-origin:left 0;">Настройки</div>
<div class="t" style="left:375.00px;top:71.64px;line-height:16.38px;font-size:12.6px;color:#000;transform:scaleX(0.9630);transform-origin:left 0;">Отдохнуть</div>
<div class="t" style="left:447.20px;top:71.64px;line-height:16.38px;font-size:12.6px;color:#000;transform:scaleX(0.9836);transform-origin:left 0;">Окно</div>
<div class="t" style="left:489.20px;top:71.64px;line-height:16.38px;font-size:12.6px;color:#000;transform:scaleX(0.9822);transform-origin:left 0;">Помощь</div>
<div class="b" style="left:28.60px;top:85.70px;width:7.20px;height:0.90px;background:#000"></div>
<div class="b" style="left:1456.3px;top:73.400px;width:12.8px;height:11.400px;background:#f0f0f0;border-top:1px solid #fff;border-left:1px solid #fff;border-right:1.300px solid #6a6a6a;border-bottom:1.300px solid #6a6a6a;box-sizing:border-box"></div><svg class="i" style="left:1456.3px;top:73.400px" width="13" height="11.400" viewBox="0 0 13 11.400"><path d="M2.700 8.600h6.200" stroke="#000" stroke-width="1.700"/></svg>
<div class="b" style="left:1469.4px;top:73.400px;width:13.1px;height:11.400px;background:#f0f0f0;border-top:1px solid #fff;border-left:1px solid #fff;border-right:1.300px solid #6a6a6a;border-bottom:1.300px solid #6a6a6a;box-sizing:border-box"></div><svg class="i" style="left:1469.4px;top:73.400px" width="13" height="11.400" viewBox="0 0 13 11.400"><path d="M3 5.200h4.800v3.600H3zM4.800 5v-2h4.800v3.600H8" stroke="#000" stroke-width="1.200" fill="none"/><path d="M3 5.200h4.800M4.800 3h4.800" stroke="#000" stroke-width="1.800"/></svg>
<div class="b" style="left:1484.4px;top:73.400px;width:13.1px;height:11.400px;background:#f0f0f0;border-top:1px solid #fff;border-left:1px solid #fff;border-right:1.300px solid #6a6a6a;border-bottom:1.300px solid #6a6a6a;box-sizing:border-box"></div><svg class="i" style="left:1484.4px;top:73.400px" width="13" height="11.400" viewBox="0 0 13 11.400"><path d="M3 2.700l6.400 5.900M9.400 2.700 3 8.600" stroke="#000" stroke-width="1.900"/></svg>
<div class="b" style="left:0.00px;top:91.80px;width:1500.00px;height:26.00px;background:#f0f0f0"></div>
<div class="b" style="left:3.00px;top:92.60px;width:1493.00px;height:2.20px;background:#f9f9f9"></div>
<div class="b" style="left:0.00px;top:91.80px;width:1.60px;height:728.00px;background:#e6e6e6"></div>
<div class="b" style="left:1.60px;top:91.80px;width:1.60px;height:702.00px;background:#fdfdfd"></div>
<div class="b" style="left:9.20px;top:95.60px;width:851.00px;height:19.80px;background:#fff;border:1px solid #b9b9b9;border-top-color:#8a8a8a;border-left-color:#8a8a8a;box-sizing:border-box"></div>
<div class="b" style="left:11.60px;top:98.30px;width:483.70px;height:15.70px;background:#0078d7"></div>
<div class="t" style="left:12.40px;top:98.54px;line-height:16.51px;font-size:12.7px;color:#fff;transform:scaleX(0.9955);transform-origin:left 0;">Смета по ТСН-2001 (11 граф); Смета по ТСН-2001 (11 граф) по двум уровням цен</div>
<svg class="i" style="left:847.400px;top:105px" width="7.600" height="4" viewBox="0 0 10 5.300"><path d="M.3.300h9.400L5 5.200z" fill="#111"/></svg>
<div class="b" style="left:866.00px;top:97.40px;width:114.20px;height:18.60px;background:#efefef;border:1px solid #d3d3d3;border-radius:3px;box-sizing:border-box"></div>
<div class="b" style="left:984.80px;top:97.40px;width:216.40px;height:18.60px;background:#efefef;border:1px solid #d3d3d3;border-radius:3px;box-sizing:border-box"></div>
<div class="b" style="left:1206.40px;top:97.40px;width:94.20px;height:18.60px;background:#efefef;border:1px solid #d3d3d3;border-radius:3px;box-sizing:border-box"></div>
<div class="b" style="left:1306.00px;top:97.40px;width:85.20px;height:18.60px;background:#efefef;border:1px solid #d3d3d3;border-radius:3px;box-sizing:border-box"></div>
<div class="b" style="left:1396.60px;top:97.40px;width:94.00px;height:18.60px;background:#efefef;border:1px solid #d3d3d3;border-radius:3px;box-sizing:border-box"></div>
<div class="t" style="left:886.00px;top:97.25px;line-height:17.16px;font-size:13.2px;color:#262626;transform:scaleX(0.9759);transform-origin:left 0;">Сформировать</div>
<div class="t" style="left:1002.60px;top:97.25px;line-height:17.16px;font-size:13.2px;color:#262626;transform:scaleX(0.9735);transform-origin:left 0;">Сформировать с параметрами...</div>
<div class="t" style="left:1225.00px;top:97.25px;line-height:17.16px;font-size:13.2px;color:#262626;transform:scaleX(0.9478);transform-origin:left 0;">Сохранить...</div>
<div class="t" style="left:1335.00px;top:97.25px;line-height:17.16px;font-size:13.2px;color:#262626;transform:scaleX(0.9944);transform-origin:left 0;">Печать</div>
<div class="t" style="left:1416.00px;top:97.25px;line-height:17.16px;font-size:13.2px;color:#262626;transform:scaleX(0.9561);transform-origin:left 0;">Настройки...</div>
<svg class="i" style="left:870.00px;top:101.00px" width="11.5" height="11.5" viewBox="0 0 16 16"><rect x="1" y="1.500" width="14" height="13" fill="#fff" stroke="#4f9bd6" stroke-width="1.200"/><rect x="1.500" y="2" width="13" height="2.800" fill="#7fbbe8"/><path d="M1.500 8h13M1.500 11.200h13M5.500 5v9.500M10 5v9.500" stroke="#a9cdea" stroke-width=".9"/></svg>
<svg class="i" style="left:989.60px;top:101.00px" width="11.5" height="11.5" viewBox="0 0 16 16"><rect x="1" y="1.500" width="14" height="13" fill="#fff" stroke="#4f9bd6" stroke-width="1.200"/><rect x="1.500" y="2" width="13" height="2.800" fill="#7fbbe8"/><path d="M1.500 8h13M1.500 11.200h13M5.500 5v9.500M10 5v9.500" stroke="#a9cdea" stroke-width=".9"/><path d="M6 13 12 6.500l1.800 1.600L7.800 14.600l-2.400.6z" fill="#eb8f2d" stroke="#a55a10" stroke-width=".5"/><path d="M12.300 6.200l1.100-1.200 1.800 1.600-1.100 1.200z" fill="#e85a9a"/></svg>
<svg class="i" style="left:1209.80px;top:100.40px" width="12" height="12" viewBox="0 0 16 16"><path d="M1 1h12l2 2v12H1z" fill="#2b2b2b"/><rect x="3.500" y="1" width="8" height="5" fill="#f3f3f3"/><rect x="8.500" y="1.800" width="1.800" height="3.200" fill="#2b2b2b"/><rect x="3" y="8.500" width="10" height="6.500" fill="#fff"/></svg>
<svg class="i" style="left:1318.00px;top:99.80px" width="13" height="13" viewBox="0 0 16 16"><rect x="4" y="1" width="8" height="5" fill="#fff" stroke="#9a9a9a" stroke-width=".9"/><rect x="1" y="5.500" width="14" height="6.500" rx="1.200" fill="#e9e9e9" stroke="#9a9a9a" stroke-width=".9"/><rect x="4" y="10" width="8" height="5" fill="#fff" stroke="#9a9a9a" stroke-width=".9"/></svg>
<svg class="i" style="left:1399.40px;top:100.00px" width="12.6" height="12.6" viewBox="0 0 16 16"><rect x="1" y="1" width="13.500" height="13.500" fill="#fff" stroke="#4f9bd6" stroke-width="1.200"/><rect x="1.500" y="1.500" width="12.500" height="2.600" fill="#7fbbe8"/><path d="M1 6.500h3M1 9.500h3M1 12.500h3" stroke="#4f9bd6" stroke-width=".9"/><circle cx="9.500" cy="10" r="3.600" fill="#3e4a1c"/><path d="M9.500 5v10M4.500 10h10M6 6.500l7 7M13 6.500l-7 7" stroke="#3e4a1c" stroke-width="1.600"/><circle cx="9.500" cy="10" r="1.500" fill="#e8e8d8"/></svg>
<!-- grid -->
<div class="b" style="left:3.1px;top:117.9px;width:1479.3px;height:635.5px;background:#fff;overflow:hidden">
<div class="b" style="left:0.00px;top:0.00px;width:1479.30px;height:11.70px;background:linear-gradient(#f7f9fc,#e3e9f3 45%,#d2dceb 90%,#aebdd2)"></div>
<div class="b" style="left:0.00px;top:0.00px;width:20.30px;height:11.70px;background:linear-gradient(#b5c9e6,#a9c0e2)"></div>
<svg class="i" style="left:9.8px;top:2.0px" width="9" height="9" viewBox="0 0 9 9"><path d="M8.500.5v8H.5z" fill="#dbe6f5"/></svg>
<div class="b" style="left:465.90px;top:0.00px;width:65.10px;height:11.70px;background:linear-gradient(#f9d9a0,#f5c973 80%,#f0a84f);border-left:1px solid #f0ac58;border-right:1px solid #f0ac58;box-sizing:border-box"></div>
<div class="b" style="left:19.80px;top:0.50px;width:1.00px;height:10.70px;background:#b4c3d9;box-shadow:1px 0 0 #f2f5fa"></div>
<div class="c" style="left:20.30px;top:0.30px;width:30.80px;text-align:center;font-size:10.400px;line-height:12px;color:#3f4347">A</div>
<div class="b" style="left:50.60px;top:0.50px;width:1.00px;height:10.70px;background:#b4c3d9;box-shadow:1px 0 0 #f2f5fa"></div>
<div class="c" style="left:51.10px;top:0.30px;width:64.10px;text-align:center;font-size:10.400px;line-height:12px;color:#3f4347">B</div>
<div class="b" style="left:114.70px;top:0.50px;width:1.00px;height:10.70px;background:#b4c3d9;box-shadow:1px 0 0 #f2f5fa"></div>
<div class="c" style="left:115.20px;top:0.30px;width:222.60px;text-align:center;font-size:10.400px;line-height:12px;color:#3f4347">C</div>
<div class="b" style="left:337.30px;top:0.50px;width:1.00px;height:10.70px;background:#b4c3d9;box-shadow:1px 0 0 #f2f5fa"></div>
<div class="c" style="left:337.80px;top:0.30px;width:64.10px;text-align:center;font-size:10.400px;line-height:12px;color:#3f4347">D</div>
<div class="b" style="left:401.40px;top:0.50px;width:1.00px;height:10.70px;background:#b4c3d9;box-shadow:1px 0 0 #f2f5fa"></div>
<div class="c" style="left:401.90px;top:0.30px;width:64.00px;text-align:center;font-size:10.400px;line-height:12px;color:#3f4347">E</div>
<div class="c" style="left:465.90px;top:0.30px;width:64.10px;text-align:center;font-size:10.400px;line-height:12px;color:#3f4347">F</div>
<div class="c" style="left:530.00px;top:0.30px;width:68.80px;text-align:center;font-size:10.400px;line-height:12px;color:#3f4347">G</div>
<div class="b" style="left:598.30px;top:0.50px;width:1.00px;height:10.70px;background:#b4c3d9;box-shadow:1px 0 0 #f2f5fa"></div>
<div class="c" style="left:598.80px;top:0.30px;width:59.40px;text-align:center;font-size:10.400px;line-height:12px;color:#3f4347">H</div>
<div class="b" style="left:657.70px;top:0.50px;width:1.00px;height:10.70px;background:#b4c3d9;box-shadow:1px 0 0 #f2f5fa"></div>
<div class="c" style="left:658.20px;top:0.30px;width:69.50px;text-align:center;font-size:10.400px;line-height:12px;color:#3f4347">I</div>
<div class="b" style="left:727.20px;top:0.50px;width:1.00px;height:10.70px;background:#b4c3d9;box-shadow:1px 0 0 #f2f5fa"></div>
<div class="c" style="left:727.70px;top:0.30px;width:69.50px;text-align:center;font-size:10.400px;line-height:12px;color:#3f4347">J</div>
<div class="b" style="left:796.70px;top:0.50px;width:1.00px;height:10.70px;background:#b4c3d9;box-shadow:1px 0 0 #f2f5fa"></div>
<div class="c" style="left:797.20px;top:0.30px;width:69.50px;text-align:center;font-size:10.400px;line-height:12px;color:#3f4347">K</div>
<div class="b" style="left:866.20px;top:0.50px;width:1.00px;height:10.70px;background:#b4c3d9;box-shadow:1px 0 0 #f2f5fa"></div>
<div class="c" style="left:866.70px;top:0.30px;width:50.00px;text-align:center;font-size:10.400px;line-height:12px;color:#3f4347">L</div>
<div class="b" style="left:916.20px;top:0.50px;width:1.00px;height:10.70px;background:#b4c3d9;box-shadow:1px 0 0 #f2f5fa"></div>
<div class="c" style="left:916.70px;top:0.30px;width:50.00px;text-align:center;font-size:10.400px;line-height:12px;color:#3f4347">M</div>
<div class="b" style="left:966.20px;top:0.50px;width:1.00px;height:10.70px;background:#b4c3d9;box-shadow:1px 0 0 #f2f5fa"></div>
<div class="c" style="left:966.70px;top:0.30px;width:50.00px;text-align:center;font-size:10.400px;line-height:12px;color:#3f4347">N</div>
<div class="b" style="left:1016.20px;top:0.50px;width:1.00px;height:10.70px;background:#b4c3d9;box-shadow:1px 0 0 #f2f5fa"></div>
<div class="c" style="left:1016.70px;top:0.30px;width:50.00px;text-align:center;font-size:10.400px;line-height:12px;color:#3f4347">AK</div>
<div class="b" style="left:1066.20px;top:0.50px;width:1.00px;height:10.70px;background:#b4c3d9;box-shadow:1px 0 0 #f2f5fa"></div>
<div class="c" style="left:1066.70px;top:0.30px;width:50.00px;text-align:center;font-size:10.400px;line-height:12px;color:#3f4347">AL</div>
<div class="b" style="left:1116.20px;top:0.50px;width:1.00px;height:10.70px;background:#b4c3d9;box-shadow:1px 0 0 #f2f5fa"></div>
<div class="c" style="left:1116.70px;top:0.30px;width:50.00px;text-align:center;font-size:10.400px;line-height:12px;color:#3f4347">AM</div>
<div class="b" style="left:1166.20px;top:0.50px;width:1.00px;height:10.70px;background:#b4c3d9;box-shadow:1px 0 0 #f2f5fa"></div>
<div class="c" style="left:1166.70px;top:0.30px;width:50.00px;text-align:center;font-size:10.400px;line-height:12px;color:#3f4347">AN</div>
<div class="b" style="left:1216.20px;top:0.50px;width:1.00px;height:10.70px;background:#b4c3d9;box-shadow:1px 0 0 #f2f5fa"></div>
<div class="c" style="left:1216.70px;top:0.30px;width:50.00px;text-align:center;font-size:10.400px;line-height:12px;color:#3f4347">AO</div>
<div class="b" style="left:1266.20px;top:0.50px;width:1.00px;height:10.70px;background:#b4c3d9;box-shadow:1px 0 0 #f2f5fa"></div>
<div class="c" style="left:1266.70px;top:0.30px;width:50.00px;text-align:center;font-size:10.400px;line-height:12px;color:#3f4347">AP</div>
<div class="b" style="left:1316.20px;top:0.50px;width:1.00px;height:10.70px;background:#b4c3d9;box-shadow:1px 0 0 #f2f5fa"></div>
<div class="c" style="left:1316.70px;top:0.30px;width:50.00px;text-align:center;font-size:10.400px;line-height:12px;color:#3f4347">AQ</div>
<div class="b" style="left:1366.20px;top:0.50px;width:1.00px;height:10.70px;background:#b4c3d9;box-shadow:1px 0 0 #f2f5fa"></div>
<div class="c" style="left:1366.70px;top:0.30px;width:50.00px;text-align:center;font-size:10.400px;line-height:12px;color:#3f4347">AR</div>
<div class="b" style="left:1416.20px;top:0.50px;width:1.00px;height:10.70px;background:#b4c3d9;box-shadow:1px 0 0 #f2f5fa"></div>
<div class="c" style="left:1416.70px;top:0.30px;width:50.00px;text-align:center;font-size:10.400px;line-height:12px;color:#3f4347">AS</div>
<div class="b" style="left:1466.20px;top:0.50px;width:1.00px;height:10.70px;background:#b4c3d9;box-shadow:1px 0 0 #f2f5fa"></div>
<div class="b" style="left:0.00px;top:11.70px;width:20.30px;height:623.80px;background:#e1e9f5;border-right:1px solid #c3d2e8;box-sizing:border-box"></div>
<div class="b" style="left:50.60px;top:11.70px;width:1.00px;height:623.80px;background:#dfe3ed"></div>
<div class="b" style="left:114.70px;top:11.70px;width:1.00px;height:623.80px;background:#dfe3ed"></div>
<div class="b" style="left:337.30px;top:11.70px;width:1.00px;height:623.80px;background:#dfe3ed"></div>
<div class="b" style="left:401.40px;top:11.70px;width:1.00px;height:623.80px;background:#dfe3ed"></div>
<div class="b" style="left:465.40px;top:11.70px;width:1.00px;height:623.80px;background:#dfe3ed"></div>
<div class="b" style="left:529.50px;top:11.70px;width:1.00px;height:623.80px;background:#dfe3ed"></div>
<div class="b" style="left:598.30px;top:11.70px;width:1.00px;height:623.80px;background:#dfe3ed"></div>
<div class="b" style="left:657.70px;top:11.70px;width:1.00px;height:59.20px;background:#dfe3ed"></div>
<div class="b" style="left:657.70px;top:86.55px;width:1.00px;height:219.55px;background:#dfe3ed"></div>
<div class="b" style="left:657.70px;top:321.70px;width:1.00px;height:71.10px;background:#dfe3ed"></div>
<div class="b" style="left:657.70px;top:408.40px;width:1.00px;height:71.10px;background:#dfe3ed"></div>
<div class="b" style="left:657.70px;top:495.15px;width:1.00px;height:74.25px;background:#dfe3ed"></div>
<div class="b" style="left:657.70px;top:569.40px;width:1.00px;height:13.25px;background:#dfe3ed"></div>
<div class="b" style="left:657.70px;top:598.30px;width:1.00px;height:43.80px;background:#dfe3ed"></div>
<div class="b" style="left:727.20px;top:11.70px;width:1.00px;height:623.80px;background:#dfe3ed"></div>
<div class="b" style="left:796.70px;top:11.70px;width:1.00px;height:59.20px;background:#dfe3ed"></div>
<div class="b" style="left:796.70px;top:86.55px;width:1.00px;height:219.55px;background:#dfe3ed"></div>
<div class="b" style="left:796.70px;top:321.70px;width:1.00px;height:71.10px;background:#dfe3ed"></div>
<div class="b" style="left:796.70px;top:408.40px;width:1.00px;height:71.10px;background:#dfe3ed"></div>
<div class="b" style="left:796.70px;top:495.15px;width:1.00px;height:74.25px;background:#dfe3ed"></div>
<div class="b" style="left:796.70px;top:569.40px;width:1.00px;height:13.25px;background:#dfe3ed"></div>
<div class="b" style="left:796.70px;top:598.30px;width:1.00px;height:43.80px;background:#dfe3ed"></div>
<div class="b" style="left:866.20px;top:11.70px;width:1.00px;height:623.80px;background:#dfe3ed"></div>
<div class="b" style="left:916.20px;top:11.70px;width:1.00px;height:623.80px;background:#dfe3ed"></div>
<div class="b" style="left:966.20px;top:11.70px;width:1.00px;height:623.80px;background:#dfe3ed"></div>
<div class="b" style="left:1016.20px;top:11.70px;width:1.00px;height:623.80px;background:#dfe3ed"></div>
<div class="b" style="left:1066.20px;top:11.70px;width:1.00px;height:623.80px;background:#dfe3ed"></div>
<div class="b" style="left:1116.20px;top:11.70px;width:1.00px;height:623.80px;background:#dfe3ed"></div>
<div class="b" style="left:1166.20px;top:11.70px;width:1.00px;height:623.80px;background:#dfe3ed"></div>
<div class="b" style="left:1216.20px;top:11.70px;width:1.00px;height:623.80px;background:#dfe3ed"></div>
<div class="b" style="left:1266.20px;top:11.70px;width:1.00px;height:623.80px;background:#dfe3ed"></div>
<div class="b" style="left:1316.20px;top:11.70px;width:1.00px;height:623.80px;background:#dfe3ed"></div>
<div class="b" style="left:1366.20px;top:11.70px;width:1.00px;height:623.80px;background:#dfe3ed"></div>
<div class="b" style="left:1416.20px;top:11.70px;width:1.00px;height:623.80px;background:#dfe3ed"></div>
<div class="b" style="left:1466.20px;top:11.70px;width:1.00px;height:623.80px;background:#dfe3ed"></div>
<div class="b" style="left:0.00px;top:70.40px;width:20.30px;height:1.00px;background:#c3d2e8"></div>
<div class="b" style="left:20.30px;top:70.40px;width:1459.00px;height:1.00px;background:#dfe3ed"></div>
<div class="b" style="left:20.30px;top:70.60px;width:847.40px;height:1.00px;background:#3a3a3a"></div>
<div class="c" style="left:0;top:58.70px;width:18.10px;text-align:right;font-size:10px;line-height:12px;color:#4b586c">945</div>
<div class="b" style="left:0.00px;top:86.05px;width:20.30px;height:1.00px;background:#c3d2e8"></div>
<div class="b" style="left:20.30px;top:86.05px;width:1459.00px;height:1.00px;background:#dfe3ed"></div>
<div class="c" style="left:0;top:74.35px;width:18.10px;text-align:right;font-size:10px;line-height:12px;color:#4b586c">946</div>
<div class="b" style="left:0.00px;top:305.60px;width:20.30px;height:1.00px;background:#c3d2e8"></div>
<div class="b" style="left:20.30px;top:305.60px;width:1459.00px;height:1.00px;background:#dfe3ed"></div>
<div class="b" style="left:20.30px;top:305.80px;width:847.40px;height:1.00px;background:#3a3a3a"></div>
<div class="c" style="left:0;top:293.90px;width:18.10px;text-align:right;font-size:10px;line-height:12px;color:#4b586c">947</div>
<div class="b" style="left:0.00px;top:321.20px;width:20.30px;height:1.00px;background:#c3d2e8"></div>
<div class="b" style="left:20.30px;top:321.20px;width:1459.00px;height:1.00px;background:#dfe3ed"></div>
<div class="c" style="left:0;top:309.50px;width:18.10px;text-align:right;font-size:10px;line-height:12px;color:#4b586c">948</div>
<div class="b" style="left:0.00px;top:392.30px;width:20.30px;height:1.00px;background:#c3d2e8"></div>
<div class="b" style="left:20.30px;top:392.30px;width:1459.00px;height:1.00px;background:#dfe3ed"></div>
<div class="b" style="left:20.30px;top:392.50px;width:847.40px;height:1.00px;background:#3a3a3a"></div>
<div class="c" style="left:0;top:380.60px;width:18.10px;text-align:right;font-size:10px;line-height:12px;color:#4b586c">949</div>
<div class="b" style="left:0.00px;top:407.90px;width:20.30px;height:1.00px;background:#c3d2e8"></div>
<div class="b" style="left:20.30px;top:407.90px;width:1459.00px;height:1.00px;background:#dfe3ed"></div>
<div class="c" style="left:0;top:396.20px;width:18.10px;text-align:right;font-size:10px;line-height:12px;color:#4b586c">950</div>
<div class="b" style="left:0.00px;top:479.00px;width:20.30px;height:1.00px;background:#c3d2e8"></div>
<div class="b" style="left:20.30px;top:479.00px;width:1459.00px;height:1.00px;background:#dfe3ed"></div>
<div class="b" style="left:20.30px;top:479.20px;width:847.40px;height:1.00px;background:#3a3a3a"></div>
<div class="c" style="left:0;top:467.30px;width:18.10px;text-align:right;font-size:10px;line-height:12px;color:#4b586c">951</div>
<div class="b" style="left:0.00px;top:494.65px;width:20.30px;height:1.00px;background:#c3d2e8"></div>
<div class="b" style="left:20.30px;top:494.65px;width:1459.00px;height:1.00px;background:#dfe3ed"></div>
<div class="c" style="left:0;top:482.95px;width:18.10px;text-align:right;font-size:10px;line-height:12px;color:#4b586c">952</div>
<div class="b" style="left:0.00px;top:568.90px;width:20.30px;height:1.00px;background:#c3d2e8"></div>
<div class="b" style="left:20.30px;top:568.90px;width:1459.00px;height:1.00px;background:#dfe3ed"></div>
<div class="c" style="left:0;top:557.20px;width:18.10px;text-align:right;font-size:10px;line-height:12px;color:#4b586c">953</div>
<div class="b" style="left:0.00px;top:582.15px;width:20.30px;height:1.00px;background:#c3d2e8"></div>
<div class="b" style="left:20.30px;top:582.15px;width:1459.00px;height:1.00px;background:#dfe3ed"></div>
<div class="b" style="left:20.30px;top:582.35px;width:847.40px;height:1.00px;background:#3a3a3a"></div>
<div class="c" style="left:0;top:571.25px;width:18.10px;text-align:right;font-size:10px;line-height:12px;color:#4b586c">954</div>
<div class="b" style="left:0.00px;top:597.80px;width:20.30px;height:1.00px;background:#c3d2e8"></div>
<div class="b" style="left:20.30px;top:597.80px;width:1459.00px;height:1.00px;background:#dfe3ed"></div>
<div class="c" style="left:0;top:586.10px;width:18.10px;text-align:right;font-size:10px;line-height:12px;color:#4b586c">955</div>
<div class="b" style="left:0.00px;top:321.70px;width:20.30px;height:71.10px;background:#ffd58e;border-right:1px solid #f3a95a;border-top:1px solid #f3a95a;border-bottom:1px solid #f3a95a;box-sizing:border-box"></div>
<div class="c" style="left:0;top:380.60px;width:18.10px;text-align:right;font-size:10px;line-height:12px;color:#4b586c">949</div>
<div class="c" style="left:22.50px;top:12.55px;width:27.80px;font-size:11.4px;line-height:14.86px;text-align:left;">109</div>
<div class="c" style="left:53.30px;top:12.55px;width:61.10px;font-size:11.4px;line-height:14.86px;text-align:left;">1.12-5-373</div>
<div class="c" style="left:117.40px;top:12.55px;width:219.60px;font-size:11.4px;line-height:14.86px;text-align:left;">Трубы электротехнические<br>гофрированные, поливинилхлоридные,<br>негорючие, с зондом, наружный диаметр<br>25 мм</div>
<div class="c" style="left:337.00px;top:57.04px;width:61.50px;font-size:11.4px;line-height:14.86px;text-align:right;font-style:italic;">м</div>
<div class="c" style="left:402.90px;top:57.04px;width:61.40px;font-size:11.4px;line-height:14.86px;text-align:right;">8539</div>
<div class="c" style="left:466.90px;top:57.04px;width:61.50px;font-size:11.4px;line-height:14.86px;text-align:right;">5,19</div>
<div class="c" style="left:599.80px;top:57.04px;width:56.80px;font-size:11.4px;line-height:14.86px;text-align:right;">1</div>
<div class="c" style="left:659.20px;top:57.04px;width:66.90px;font-size:11.4px;line-height:14.86px;text-align:right;">44 317,41</div>
<div class="c" style="left:728.70px;top:57.04px;width:66.90px;font-size:11.4px;line-height:14.86px;text-align:right;">3,45</div>
<div class="c" style="left:798.20px;top:57.04px;width:66.90px;font-size:11.4px;line-height:14.86px;text-align:right;">152 895,06</div>
<div class="c" style="left:599.80px;top:71.79px;width:126.30px;font-size:11.4px;line-height:14.86px;text-align:right;font-weight:bold;">44 317,41</div>
<div class="c" style="left:728.70px;top:71.79px;width:136.40px;font-size:11.4px;line-height:14.86px;text-align:right;font-weight:bold;">152 895,06</div>
<div class="c" style="left:22.50px;top:87.40px;width:27.80px;font-size:11.4px;line-height:14.86px;text-align:left;">110</div>
<div class="c" style="left:53.30px;top:87.40px;width:61.10px;font-size:11.4px;line-height:14.86px;text-align:left;">МКЭ-33-<br>673/7-1 от<br>14.04.2017</div>
<div class="c" style="left:117.40px;top:87.40px;width:219.60px;font-size:11.4px;line-height:14.86px;text-align:left;">Коробка распределительная<br>огнезащитная JBS100, предел<br>огнестойкости Е60, Е90, степень<br>защиты - IP55, количество полюсов -<br>5,сечение -   1,5-6мм2, количество<br>выходов - 6, цвет оранжевый,<br>климатическое исполнение УХЛ-4,<br>ударопрочность 07IK (2Дж), материал<br>коробки - огнестойкий безгалогенный HF<br>термопласт, Экопласт, артикул<br>43217HF, габаритные размеры<br>100х100х55мм, расчетная масса 0,467 кг</div>
<div class="c" style="left:117.40px;top:265.42px;width:230.00px;font-size:10.32px;line-height:13.3px;text-align:left;font-style:italic;">Базисная стоимость: 234,46 = [1 523,97 /<br>6,63] +  2% Заг.скл</div>
<div class="c" style="left:337.00px;top:292.24px;width:61.50px;font-size:11.4px;line-height:14.86px;text-align:right;font-style:italic;">ШТ</div>
<div class="c" style="left:402.90px;top:292.24px;width:61.40px;font-size:11.4px;line-height:14.86px;text-align:right;">20</div>
<div class="c" style="left:466.90px;top:292.24px;width:61.50px;font-size:11.4px;line-height:14.86px;text-align:right;">234,46</div>
<div class="c" style="left:599.80px;top:292.24px;width:56.80px;font-size:11.4px;line-height:14.86px;text-align:right;">1</div>
<div class="c" style="left:659.20px;top:292.24px;width:66.90px;font-size:11.4px;line-height:14.86px;text-align:right;">4 689,20</div>
<div class="c" style="left:728.70px;top:292.24px;width:66.90px;font-size:11.4px;line-height:14.86px;text-align:right;">6,63</div>
<div class="c" style="left:798.20px;top:292.24px;width:66.90px;font-size:11.4px;line-height:14.86px;text-align:right;">31 089,40</div>
<div class="c" style="left:599.80px;top:306.94px;width:126.30px;font-size:11.4px;line-height:14.86px;text-align:right;font-weight:bold;">4 689,20</div>
<div class="c" style="left:728.70px;top:306.94px;width:136.40px;font-size:11.4px;line-height:14.86px;text-align:right;font-weight:bold;">31 089,40</div>
<div class="c" style="left:22.50px;top:322.55px;width:27.80px;font-size:11.4px;line-height:14.86px;text-align:left;">111</div>
<div class="c" style="left:53.30px;top:322.55px;width:61.10px;font-size:11.4px;line-height:14.86px;text-align:left;">МКЭ-33-<br>1642/8-1 от<br>26.08.2019</div>
<div class="c" style="left:117.40px;top:322.55px;width:219.60px;font-size:11.4px;line-height:14.86px;text-align:left;">Муфта труба-коробка, BY25/BK25. LSZH,<br>степень защиты IP67. артикул<br>44525LSZH-10 (упаковка=10 шт)</div>
<div class="c" style="left:117.40px;top:366.83px;width:230.00px;font-size:10.32px;line-height:13.3px;text-align:left;font-style:italic;">Базисная стоимость: 19,76 = [128,42 /  6,63]<br>+  2% Заг.скл</div>
<div class="c" style="left:337.00px;top:378.94px;width:61.50px;font-size:11.4px;line-height:14.86px;text-align:right;font-style:italic;">ШТ</div>
<div class="c" style="left:402.90px;top:378.94px;width:61.40px;font-size:11.4px;line-height:14.86px;text-align:right;">120</div>
<div class="c" style="left:466.90px;top:378.94px;width:61.50px;font-size:11.4px;line-height:14.86px;text-align:right;">19,76</div>
<div class="c" style="left:599.80px;top:378.94px;width:56.80px;font-size:11.4px;line-height:14.86px;text-align:right;">1</div>
<div class="c" style="left:659.20px;top:378.94px;width:66.90px;font-size:11.4px;line-height:14.86px;text-align:right;">2 371,20</div>
<div class="c" style="left:728.70px;top:378.94px;width:66.90px;font-size:11.4px;line-height:14.86px;text-align:right;">6,63</div>
<div class="c" style="left:798.20px;top:378.94px;width:66.90px;font-size:11.4px;line-height:14.86px;text-align:right;">15 721,06</div>
<div class="c" style="left:599.80px;top:393.64px;width:126.30px;font-size:11.4px;line-height:14.86px;text-align:right;font-weight:bold;">2 371,20</div>
<div class="c" style="left:728.70px;top:393.64px;width:136.40px;font-size:11.4px;line-height:14.86px;text-align:right;font-weight:bold;">15 721,06</div>
<div class="c" style="left:22.50px;top:409.25px;width:27.80px;font-size:11.4px;line-height:14.86px;text-align:left;">112</div>
<div class="c" style="left:53.30px;top:409.25px;width:61.10px;font-size:11.4px;line-height:14.86px;text-align:left;">МКЭ-33-<br>448/8-3 от<br>05.09.2018</div>
<div class="c" style="left:117.40px;top:409.25px;width:219.60px;font-size:11.4px;line-height:14.86px;text-align:left;">Муфта соединительная MAG25 для<br>жёстких труб Ду 25мм (Экопласт), АБС<br>пластик, IP40, арт. 4252</div>
<div class="c" style="left:117.40px;top:453.53px;width:230.00px;font-size:10.32px;line-height:13.3px;text-align:left;font-style:italic;">Базисная стоимость: 0,68 = [4,44 /  6,63] +<br>2% Заг.скл</div>
<div class="c" style="left:337.00px;top:465.64px;width:61.50px;font-size:11.4px;line-height:14.86px;text-align:right;font-style:italic;">ШТ</div>
<div class="c" style="left:402.90px;top:465.64px;width:61.40px;font-size:11.4px;line-height:14.86px;text-align:right;">300</div>
<div class="c" style="left:466.90px;top:465.64px;width:61.50px;font-size:11.4px;line-height:14.86px;text-align:right;">0,68</div>
<div class="c" style="left:599.80px;top:465.64px;width:56.80px;font-size:11.4px;line-height:14.86px;text-align:right;">1</div>
<div class="c" style="left:659.20px;top:465.64px;width:66.90px;font-size:11.4px;line-height:14.86px;text-align:right;">204,00</div>
<div class="c" style="left:728.70px;top:465.64px;width:66.90px;font-size:11.4px;line-height:14.86px;text-align:right;">6,63</div>
<div class="c" style="left:798.20px;top:465.64px;width:66.90px;font-size:11.4px;line-height:14.86px;text-align:right;">1 352,52</div>
<div class="c" style="left:599.80px;top:480.39px;width:126.30px;font-size:11.4px;line-height:14.86px;text-align:right;font-weight:bold;">204,00</div>
<div class="c" style="left:728.70px;top:480.39px;width:136.40px;font-size:11.4px;line-height:14.86px;text-align:right;font-weight:bold;">1 352,52</div>
<div class="c" style="left:22.50px;top:496.00px;width:27.80px;font-size:11.4px;line-height:14.86px;text-align:left;">113</div>
<div class="c" style="left:53.30px;top:496.00px;width:61.10px;font-size:11.4px;line-height:14.86px;text-align:left;">1.21-5-<br>1137</div>
<div class="c" style="left:117.40px;top:496.00px;width:219.60px;font-size:11.4px;line-height:14.86px;text-align:left;">Держатели пластиковые с защелкой для<br>крепления труб, рукавов и гибких<br>вводов диаметром 25 мм прим.<br>Держатель для  трубы (клипса) с<br>дюбелем и шурупом CT25G</div>
<div class="c" style="left:337.00px;top:555.54px;width:61.50px;font-size:11.4px;line-height:14.86px;text-align:right;font-style:italic;">100 шт.</div>
<div class="c" style="left:402.90px;top:555.54px;width:61.40px;font-size:11.4px;line-height:14.86px;text-align:right;">170,78</div>
<div class="c" style="left:466.90px;top:555.54px;width:61.50px;font-size:11.4px;line-height:14.86px;text-align:right;">154,37</div>
<div class="c" style="left:599.80px;top:555.54px;width:56.80px;font-size:11.4px;line-height:14.86px;text-align:right;">1</div>
<div class="c" style="left:659.20px;top:555.54px;width:66.90px;font-size:11.4px;line-height:14.86px;text-align:right;">26 363,31</div>
<div class="c" style="left:728.70px;top:555.54px;width:66.90px;font-size:11.4px;line-height:14.86px;text-align:right;">1,62</div>
<div class="c" style="left:798.20px;top:555.54px;width:66.90px;font-size:11.4px;line-height:14.86px;text-align:right;">42 708,56</div>
<div class="c" style="left:117.40px;top:571.40px;width:220.00px;font-size:10px;line-height:12.5px;text-align:left;">Объем: 170,78=(17078)/100</div>
<div class="c" style="left:599.80px;top:583.54px;width:126.30px;font-size:11.4px;line-height:14.86px;text-align:right;font-weight:bold;">26 363,31</div>
<div class="c" style="left:728.70px;top:583.54px;width:136.40px;font-size:11.4px;line-height:14.86px;text-align:right;font-weight:bold;">42 708,56</div>
<div class="c" style="left:22.50px;top:599.15px;width:27.80px;font-size:11.4px;line-height:14.86px;text-align:left;">114</div>
<div class="c" style="left:53.30px;top:599.15px;width:61.10px;font-size:11.4px;line-height:14.86px;text-align:left;">1.21-5-437</div>
<div class="c" style="left:117.40px;top:599.15px;width:219.60px;font-size:11.4px;line-height:14.86px;text-align:left;">Рукава металлические из стальной<br>оцинкованной ленты, негерметичные,<br>простого профиля, марка Р3-ЦХ,</div>
<svg class="i" style="left:0;top:0" width="1480" height="636" viewBox="3.1 117.9 1480 636"><path d="M469.800 510.200V439.800H534.100V510.200" stroke="#111" stroke-width="2.300" fill="none"/><path d="M469 510.700h63" stroke="#8a8a8a" stroke-width=".9"/><rect x="532.600" y="508.600" width="3.400" height="3.400" fill="#222" stroke="#fff" stroke-width=".6"/></svg>
<svg class="i" style="left:0;top:0" width="1480" height="636" viewBox="3.1 117.9 1480 636"><path d="M223.500 500.600c20 1.200 38 .6 58 1.400 18 .6 34 1.800 49.500 1.400" stroke="#e5121d" stroke-width="3" fill="none" stroke-linecap="round"/><path d="M491 524.600c10-.2 20-.9 30-1.800 12-1 21-2 30-2.400" stroke="#e5121d" stroke-width="2.800" fill="none" stroke-linecap="round"/></svg>
</div>
<!-- bottom -->
<div class="b" style="left:1482.40px;top:117.90px;width:12.20px;height:648.00px;background:linear-gradient(90deg,#7295c6,#7f9fce 60%,#86a6d3)"></div>
<div class="b" style="left:1483.80px;top:117.90px;width:9.60px;height:4.10px;background:#fff"></div>
<div class="b" style="left:1484.80px;top:119.20px;width:7.60px;height:0.90px;background:#b9cbe6"></div>
<svg class="i" style="left:1485px;top:127.400px" width="7.200" height="4.200" viewBox="0 0 8 5"><path d="M4 .3 7.800 4.500H.2z" fill="#3f4d7c"/></svg>
<svg class="i" style="left:1485px;top:744.800px" width="7.200" height="4.200" viewBox="0 0 8 5"><path d="M4 4.700 7.800.5H.2z" fill="#3f4d7c"/></svg>
<div class="b" style="left:1483.00px;top:687.60px;width:11.00px;height:24.00px;background:linear-gradient(90deg,#f6f8fb,#e3e9f2 40%,#b9c7dc);border:.7px solid #5f78a8;border-radius:1.500px;box-sizing:border-box"></div>
<div class="b" style="left:1486.00px;top:696.20px;width:5.20px;height:0.80px;background:#7e8aa6"></div>
<div class="b" style="left:1486.00px;top:697.90px;width:5.20px;height:0.80px;background:#7e8aa6"></div>
<div class="b" style="left:1486.00px;top:699.60px;width:5.20px;height:0.80px;background:#7e8aa6"></div>
<div class="b" style="left:1486.00px;top:701.30px;width:5.20px;height:0.80px;background:#7e8aa6"></div>
<div class="b" style="left:3.10px;top:753.40px;width:1479.30px;height:12.40px;background:linear-gradient(#abc3e7,#9ab6df 50%,#8fadda)"></div>
<div class="b" style="left:3.10px;top:753.40px;width:49.00px;height:12.40px;background:linear-gradient(#d3e1f5,#b7cdee 55%,#a6c1ea)"></div>
<svg class="i" style="left:3px;top:753.400px" width="320" height="12.400" viewBox="3 753.400 320 12.400"><path d="M7.600 756.600h1.100v5.400H7.600zM12.800 756.500v5.600l-3.800-2.800zM24.200 756.500v5.600l-3.800-2.800zM31 756.500v5.600l3.800-2.800zM42.200 756.500v5.600l3.800-2.800zM46.300 756.600h1.100v5.400h-1.100z" fill="#2a4aa2"/><defs><linearGradient id="tg" x1="0" y1="0" x2="0" y2="1"><stop offset="0" stop-color="#e6eefa"/><stop offset=".5" stop-color="#d3e0f4"/><stop offset="1" stop-color="#bccfec"/></linearGradient></defs><path d="M52.300 753.700H158l5 11.800H56.500c-2.500 0-4.200-1.500-4.200-4z" fill="url(#tg)" stroke="#8aa3cf" stroke-width=".7"/><path d="M282 753.700h32.500l-9.500 11.800h-31z" fill="url(#tg)" stroke="#8aa3cf" stroke-width=".7"/><path d="M160.200 753.400H283.500l-7.500 12.200H164c-2.300 0-3.800-1.400-3.800-3.600z" fill="#fff" stroke="#7b95c6" stroke-width=".7"/><rect x="293.500" y="757" width="8.500" height="6" rx="1.500" fill="#e8eef8" stroke="#5d6f9a" stroke-width=".8"/><path d="M293 754.400l1 1.800 1.900.4-1.400 1.300.3 2-1.800-1-1.700 1 .3-2-1.400-1.300 1.900-.4z" fill="#f7b63a" stroke="#c47c10" stroke-width=".4"/></svg>
<div class="t" style="left:64.00px;top:753.14px;line-height:13.91px;font-size:10.7px;color:#3b5fa9;transform:scaleX(0.8674);transform-origin:left 0;">Смета по ТСН-2001</div>
<div class="t" style="left:168.00px;top:753.14px;line-height:13.91px;font-size:10.7px;color:#1f3f94;font-weight:bold;transform:scaleX(0.9570);transform-origin:left 0;">Смета по ТСН-2001_1</div>
<div class="b" style="left:890.90px;top:754.80px;width:5.40px;height:10.00px;background:#fff"></div>
<div class="b" style="left:893.00px;top:756.40px;width:0.90px;height:6.80px;background:#3f4d7c"></div>
<div class="b" style="left:896.40px;top:753.40px;width:586.00px;height:12.40px;background:linear-gradient(#7899c9,#7a9bc9 50%,#7395c6)"></div>
<svg class="i" style="left:900.800px;top:755.800px" width="5" height="8" viewBox="0 0 5 8"><path d="M.3 4 4.500.2v7.600z" fill="#3f4d7c"/></svg>
<svg class="i" style="left:1466.800px;top:755.800px" width="5" height="8" viewBox="0 0 5 8"><path d="M4.700 4 .5.200v7.600z" fill="#3f4d7c"/></svg>
<div class="b" style="left:910.20px;top:754.30px;width:527.40px;height:11.20px;background:linear-gradient(#f2f4f8,#e6eaf1 35%,#b7c5da 85%,#aebdd5);border:.8px solid #5f78a8;border-radius:1.500px;box-sizing:border-box"></div>
<div class="b" style="left:1170.60px;top:757.20px;width:0.80px;height:5.40px;background:#7e8aa6"></div>
<div class="b" style="left:1172.30px;top:757.20px;width:0.80px;height:5.40px;background:#7e8aa6"></div>
<div class="b" style="left:1174.00px;top:757.20px;width:0.80px;height:5.40px;background:#7e8aa6"></div>
<div class="b" style="left:1175.70px;top:757.20px;width:0.80px;height:5.40px;background:#7e8aa6"></div>
<div class="b" style="left:1476.40px;top:754.80px;width:5.20px;height:10.00px;background:#fff"></div>
<div class="b" style="left:1478.30px;top:756.40px;width:0.90px;height:6.80px;background:#3f4d7c"></div>
<div class="b" style="left:1482.40px;top:753.40px;width:12.20px;height:12.40px;background:#7b9fd4"></div>
<div class="b" style="left:0.00px;top:765.80px;width:1497.90px;height:1.30px;background:#8a8a8a"></div>
<div class="b" style="left:1496.50px;top:92.20px;width:1.70px;height:674.90px;background:#7c7c7c"></div>
<div class="b" style="left:1494.70px;top:91.80px;width:1.40px;height:674.00px;background:#ececec"></div>
<div class="b" style="left:1498.20px;top:92.20px;width:1.80px;height:700.00px;background:#f0f0f0"></div>
<div class="b" style="left:0.00px;top:767.10px;width:1497.20px;height:25.00px;background:#f0f0f0"></div>
<div class="b" style="left:0.00px;top:788.30px;width:1497.00px;height:1.00px;background:#c4c4c4"></div>
<div class="b" style="left:0.00px;top:789.30px;width:1497.00px;height:1.20px;background:#fff"></div>
<div class="b" style="left:3.00px;top:767.40px;width:79.00px;height:19.00px;background:#f0f0f0;border-left:1px solid #fff;border-right:1.200px solid #6d6d6d;border-bottom:1.200px solid #6d6d6d;box-sizing:border-box;box-shadow:.8px .8px 0 #a8a8a8"></div>
<div class="b" style="left:85.00px;top:767.40px;width:118.00px;height:19.00px;background:#f0f0f0;border-left:1px solid #fff;border-right:1.200px solid #6d6d6d;border-bottom:1.200px solid #6d6d6d;box-sizing:border-box;box-shadow:.8px .8px 0 #a8a8a8"></div>
<div class="b" style="left:206.00px;top:767.40px;width:74.00px;height:19.00px;background:#f0f0f0;border-left:1px solid #fff;border-right:1.200px solid #6d6d6d;border-bottom:1.200px solid #6d6d6d;box-sizing:border-box;box-shadow:.8px .8px 0 #a8a8a8"></div>
<div class="b" style="left:283.00px;top:767.40px;width:112.40px;height:19.00px;background:#f0f0f0;border-left:1px solid #fff;border-right:1.200px solid #6d6d6d;border-bottom:1.200px solid #6d6d6d;box-sizing:border-box;box-shadow:.8px .8px 0 #a8a8a8"></div>
<div class="b" style="left:396.00px;top:766.00px;width:100.40px;height:21.80px;background:#f0f0f0;border-left:1px solid #fff;border-right:1.300px solid #6d6d6d;border-bottom:1.300px solid #6d6d6d;box-sizing:border-box;box-shadow:1px 1px 0 #a8a8a8"></div>
<div class="t" style="left:7.00px;top:768.75px;line-height:17.16px;font-size:13.2px;color:#222;transform:scaleX(0.9710);transform-origin:left 0;">Полный вид</div>
<div class="t" style="left:88.00px;top:768.75px;line-height:17.16px;font-size:13.2px;color:#222;transform:scaleX(0.9700);transform-origin:left 0;">Сокращенный вид</div>
<div class="t" style="left:210.00px;top:768.75px;line-height:17.16px;font-size:13.2px;color:#222;transform:scaleX(0.9879);transform-origin:left 0;">Вид строки</div>
<div class="t" style="left:287.00px;top:768.75px;line-height:17.16px;font-size:13.2px;color:#222;transform:scaleX(0.9886);transform-origin:left 0;">Объектная смета</div>
<div class="t" style="left:402.00px;top:770.35px;line-height:17.16px;font-size:13.2px;color:#222;transform:scaleX(0.9852);transform-origin:left 0;">Предпросмотр</div>
<div class="b" style="left:0.00px;top:790.00px;width:1500.00px;height:30.40px;background:#f0f0f0"></div>
<div class="b" style="left:0.00px;top:790.60px;width:1500.00px;height:1.00px;background:#dadada"></div>
<div class="b" style="left:1.60px;top:792.60px;width:66.80px;height:25.60px;border-top:1px solid #a6a6a6;border-left:1px solid #a6a6a6;border-right:1px solid #fff;border-bottom:1px solid #fff;box-sizing:border-box"></div>
<div class="b" style="left:71.60px;top:792.60px;width:324.80px;height:25.60px;border-top:1px solid #a6a6a6;border-left:1px solid #a6a6a6;border-right:1px solid #fff;border-bottom:1px solid #fff;box-sizing:border-box"></div>
<div class="b" style="left:399.60px;top:792.60px;width:1045.00px;height:25.60px;border-top:1px solid #a6a6a6;border-left:1px solid #a6a6a6;border-right:1px solid #fff;border-bottom:1px solid #fff;box-sizing:border-box"></div>
<div class="b" style="left:1447.40px;top:792.60px;width:24.00px;height:25.60px;border-top:1px solid #a6a6a6;border-left:1px solid #a6a6a6;border-right:1px solid #fff;border-bottom:1px solid #fff;box-sizing:border-box"></div>
<div class="b" style="left:1473.80px;top:792.60px;width:24.20px;height:25.60px;border-top:1px solid #a6a6a6;border-left:1px solid #a6a6a6;border-right:1px solid #fff;border-bottom:1px solid #fff;box-sizing:border-box"></div>
<div class="t" style="left:404.40px;top:798.44px;line-height:16.12px;font-size:12.4px;color:#111;transform:scaleX(0.9753);transform-origin:left 0;white-space:pre;">Итого: по смете Базовый уровень цен: 3 020 304,32 руб.;  Текущий уровень цен: 32 063 091,09 руб.</div>
<div class="t" style="left:1478.00px;top:798.24px;line-height:16.12px;font-size:12.4px;color:#111;transform:scaleX(0.8599);transform-origin:left 0;">RU</div>
<svg class="i" style="left:1452.60px;top:796.60px" width="13.4" height="13.4" viewBox="0 0 16 16"><rect x="1.500" y="1.500" width="13" height="13" rx="4.500" fill="#a0a0a0"/><rect x="7" y="4" width="2.400" height="7" rx="1" fill="#e9e9e9"/><path d="M1 1l14.500 14.500" stroke="#f01020" stroke-width="1.500"/></svg>
<div class="b" style="left:0.00px;top:820.60px;width:1500.00px;height:23.40px;background:linear-gradient(90deg,#23363e,#21323b 35%,#1e2d3f 65%,#1b2743)"></div>
<div class="b" style="left:115.60px;top:820.60px;width:28.20px;height:23.40px;background:#4a5a62"></div>
<div class="b" style="left:89.60px;top:842.40px;width:22.40px;height:1.60px;background:#7cc0f2"></div>
<div class="b" style="left:115.60px;top:842.40px;width:28.20px;height:1.60px;background:#7cc0f2"></div>
<div class="b" style="left:147.60px;top:842.40px;width:22.40px;height:1.60px;background:#7cc0f2"></div>
<div class="b" style="left:205.00px;top:842.40px;width:23.00px;height:1.60px;background:#7cc0f2"></div>
<div class="b" style="left:234.40px;top:842.40px;width:22.40px;height:1.60px;background:#7cc0f2"></div>
<div class="b" style="left:176.50px;top:842.40px;width:22.50px;height:1.60px;background:#7cc0f2;opacity:0"></div>
<svg class="i" style="left:0;top:820.400px" width="300" height="23.600" viewBox="0 820.400 300 23.600"><path d="M7.500 827.700l5.400-.8v5.200H7.500zM13.700 826.800l6.900-1v6.300h-6.900zM7.500 832.900h5.400v5.200l-5.400-.8zM13.700 832.900h6.900v6.300l-6.900-1z" fill="#fff"/><circle cx="44.600" cy="830.600" r="4.300" fill="none" stroke="#fff" stroke-width="1.200"/><path d="M41.400 833.800 36 839.200" stroke="#fff" stroke-width="1.300"/><path d="M64.500 828.300h7.400v7.600h-7.400zM64.500 826.400h7.400M64.500 838h7.400M75.300 827v2.300M75.300 831v7.200" fill="none" stroke="#fff" stroke-width="1.100"/><rect x="74.300" y="830.600" width="2" height="2" fill="#fff"/><path d="M93.500 827.500h5l1.500 1.500h7.500v9.500h-14z" fill="#f5c542"/><path d="M93.500 831h14v7.500h-14z" fill="#fbd968"/><rect x="96.500" y="834.300" width="8" height="4.200" fill="#3f8fe0"/><rect x="98.600" y="836.300" width="3.800" height="2.200" fill="#fbd968"/><circle cx="158.600" cy="832" r="6.400" fill="#1877c9"/><path d="M152.500 833.500c0-4 3.200-7 7-7 3 0 5.300 1.800 5.500 4.500h-7.500c-1.500.6-2 2.500-.5 4.200-2.200 0-4-1-4.500-1.700z" fill="#35c1b8"/><path d="M157.500 831.600c-1.600 1.400-1 4.600 2.500 5.600 2 .5 3.800-.2 5-1.300-1 2-3.200 3.300-6 3.100-3.800-.3-5.600-4.300-1.500-7.400z" fill="#0c59a4"/><path d="M181.500 825.800h8l2.500 2.500v10h-10.500z" fill="#f4f6fc" stroke="#aab4d8" stroke-width=".7"/><text x="186.600" y="835.600" font-size="8" font-style="italic" font-weight="bold" font-family="Liberation Serif, serif" text-anchor="middle" fill="#2b3fb0">fw</text><path d="M210.500 835c-1-3.500 2-7 6-7 3.500 0 5.500 2 5 4.500-.4 1.800-2.500 1.500-3.500 2.300-1 1 .3 2.500-1.200 3.300-2.300 1-5.500-.5-6.300-3.100z" fill="#d8e6f4" stroke="#5f84b0" stroke-width=".7"/><circle cx="213.400" cy="832.300" r="1.100" fill="#e23b2e"/><circle cx="216.500" cy="830.400" r="1.100" fill="#2e9e4a"/><circle cx="219.600" cy="831.200" r="1.100" fill="#2e63d6"/><circle cx="213.800" cy="835.600" r="1.100" fill="#f0b51e"/><path d="M221.500 825.500l.9 4.500-.5 7.500h-1.400l-.2-7.500z" fill="#e98a2a"/><path d="M243 826.300h8.500v11.500H243z" fill="#fff" stroke="#9ec79f" stroke-width=".6"/><path d="M239.500 828.200l7.500-1.200v11l-7.500-1.200z" fill="#1f7a3a"/><path d="M241.500 830.300l3.800 4.700M245.300 830.300l-3.800 4.700" stroke="#fff" stroke-width="1.200"/><path d="M247.800 829h3M247.800 831.200h3M247.800 833.400h3M247.800 835.600h3" stroke="#3c9a55" stroke-width=".8"/></svg>
<svg class="i" style="left:123.20px;top:825.80px" width="12.8" height="12.8" viewBox="0 0 16 16"><defs><radialGradient id="ag3" cx=".45" cy=".38" r=".6"><stop offset="0" stop-color="#ffd98a"/><stop offset=".35" stop-color="#ff9a1e"/><stop offset="1" stop-color="#ff7f0e"/></radialGradient></defs><rect x=".7" y=".7" width="14.600" height="14.600" rx="1.600" fill="#fff" stroke="#f0a878" stroke-width="1.300"/><path d="M3.400 9.800c1 3.900 5.600 5.600 9.200 1.400l.5-1.800z" fill="#3a7be6"/><path d="M3.400 9.600c.5 2 2 3.200 3.800 3.400.3-1.400 1.200-2.600 2.600-3.200z" fill="#34c224"/><path d="M3 9.200c2.500 1.200 6.500 1.400 10.200-.6l-.2 1.400c-3 1.500-7 1.600-9.800.2z" fill="#ffb43a"/><path d="M2.600 7.600C2.600 4.600 4.800 2.600 7.600 2.600c2.400 0 4.200 1.400 4.800 3.600.8.400 1.400 1 1.700 1.800-1.400 1.500-4 2.200-6.500 2.200-2.200 0-4-.6-5-1.500z" fill="url(#ag3)"/></svg>
<svg class="i" style="left:1240px;top:820.400px" width="260" height="23.600" viewBox="1240 820.400 260 23.600"><circle cx="1259.300" cy="832.200" r="5.700" fill="none" stroke="#fff" stroke-width="1.300"/><circle cx="1259.300" cy="830.200" r="1" fill="#fff"/><circle cx="1259.300" cy="834.200" r="1" fill="#fff"/><rect x="1273.800" y="829" width="6.200" height="6.200" rx="1.200" fill="none" stroke="#fff" stroke-width="1"/><path d="M1280 831l3.200-1.600v5.400l-3.200-1.600M1274.500 826.800c2-1.200 5-1.200 7 0M1274.500 837.400c2 1.200 5 1.200 7 0" fill="none" stroke="#fff" stroke-width=".9"/><rect x="1290.500" y="826" width="3.400" height="3.400" fill="#e0442e"/><rect x="1294.300" y="826" width="3.400" height="3.400" fill="#e0442e"/><rect x="1290.500" y="829.800" width="3.400" height="3.400" fill="#3d7be0"/><rect x="1294.300" y="829.800" width="3.400" height="3.400" fill="#e0442e"/><rect x="1290.500" y="833.600" width="3.400" height="3.400" fill="#3d7be0"/><rect x="1294.300" y="833.600" width="3.400" height="3.400" fill="#3d7be0"/><circle cx="1299.400" cy="836" r="2.900" fill="#4fc04a"/><path d="M1299.400 834.300v3.200M1298 836.300l1.400 1.400 1.400-1.400" stroke="#fff" stroke-width=".8" fill="none"/><path d="M1315 825.800c2 1.200 4 1.600 5.800 1.600 0 5-1.200 8.600-5.800 11-4.600-2.400-5.800-6-5.800-11 1.800 0 3.800-.4 5.800-1.600z" fill="#fff"/><path d="M1315 825.800v12.600M1309.400 831.600h11.400" stroke="#222" stroke-width="1"/><path d="M1318.800 832.500l3.600 6.300h-7.200z" fill="#f6c21c"/><path d="M1318.800 834.400v2.300" stroke="#222" stroke-width=".8"/><rect x="1328.400" y="826" width="3" height="12.400" fill="#dfe8f4" stroke="#5b86c8" stroke-width=".6"/><path d="M1332.500 827v6.200a3.400 3.400 0 0 0 6.800 0V827" fill="none" stroke="#2b57d0" stroke-width="2.400"/><path d="M1334 836.500l2 1.500 2-1.500" fill="#e8eef8"/><path d="M1349.500 826.500h9.500v11.500h-9.500z" fill="#f4eef7" stroke="#b9a2c8" stroke-width=".6"/><path d="M1347 828.400h8.500v8H1347z" fill="#8d3f9f"/><text x="1351.300" y="835" font-size="6.500" font-style="italic" font-weight="bold" font-family="Liberation Sans, sans-serif" text-anchor="middle" fill="#fff">N</text><rect x="1365.600" y="825.800" width="12.600" height="12.600" fill="#0e6fe0"/><circle cx="1371.900" cy="832.100" r="4.600" fill="#fff"/><path d="M1368.600 832.100h6.600M1370.200 830.300l-1.900 1.800 1.900 1.800M1373.600 830.300l1.900 1.800-1.900 1.800" stroke="#0e6fe0" stroke-width="1.100" fill="none"/><path d="M1384.200 829.800h2.800l4.600-3.800v12.400l-4.600-3.800h-2.800z" fill="#e8532f"/><path d="M1393.400 828.500c1.600 2.200 1.600 5.200 0 7.400" stroke="#9b2c1c" stroke-width="1.100" fill="none"/><path d="M1405.500 838a9.500 9.500 0 0 1 9.500-9.500M1408.300 838a6.700 6.700 0 0 1 6.700-6.700M1411 838a4 4 0 0 1 4-4" stroke="#fff" stroke-width="1.100" fill="none" opacity=".9"/><circle cx="1414.300" cy="837.300" r="1.100" fill="#fff"/><path d="M1422 830.200h2.200l3.400-3v9.800l-3.400-3H1422z" fill="none" stroke="#fff" stroke-width=".9"/><path d="M1429.400 829.600c1.200 1.600 1.200 3.600 0 5.200M1431.400 827.800c2.200 2.600 2.200 6.200 0 8.800" stroke="#fff" stroke-width=".9" fill="none"/><path d="M1433.500 826.400c2.800 3.400 2.800 8.200 0 11.600" stroke="#8a93a5" stroke-width=".8" fill="none"/><path d="M1496.300 820.400v23.600" stroke="#8a93a5" stroke-width=".6"/></svg>
<div class="t" style="left:1443.20px;top:826.23px;line-height:12.22px;font-size:9.4px;color:#fff;transform:scaleX(0.9031);transform-origin:left 0;">РУС</div>
<div class="t" style="left:1471.20px;top:826.23px;line-height:12.22px;font-size:9.4px;color:#fff;transform:scaleX(0.8332);transform-origin:left 0;">12:43</div>
</body></html>
